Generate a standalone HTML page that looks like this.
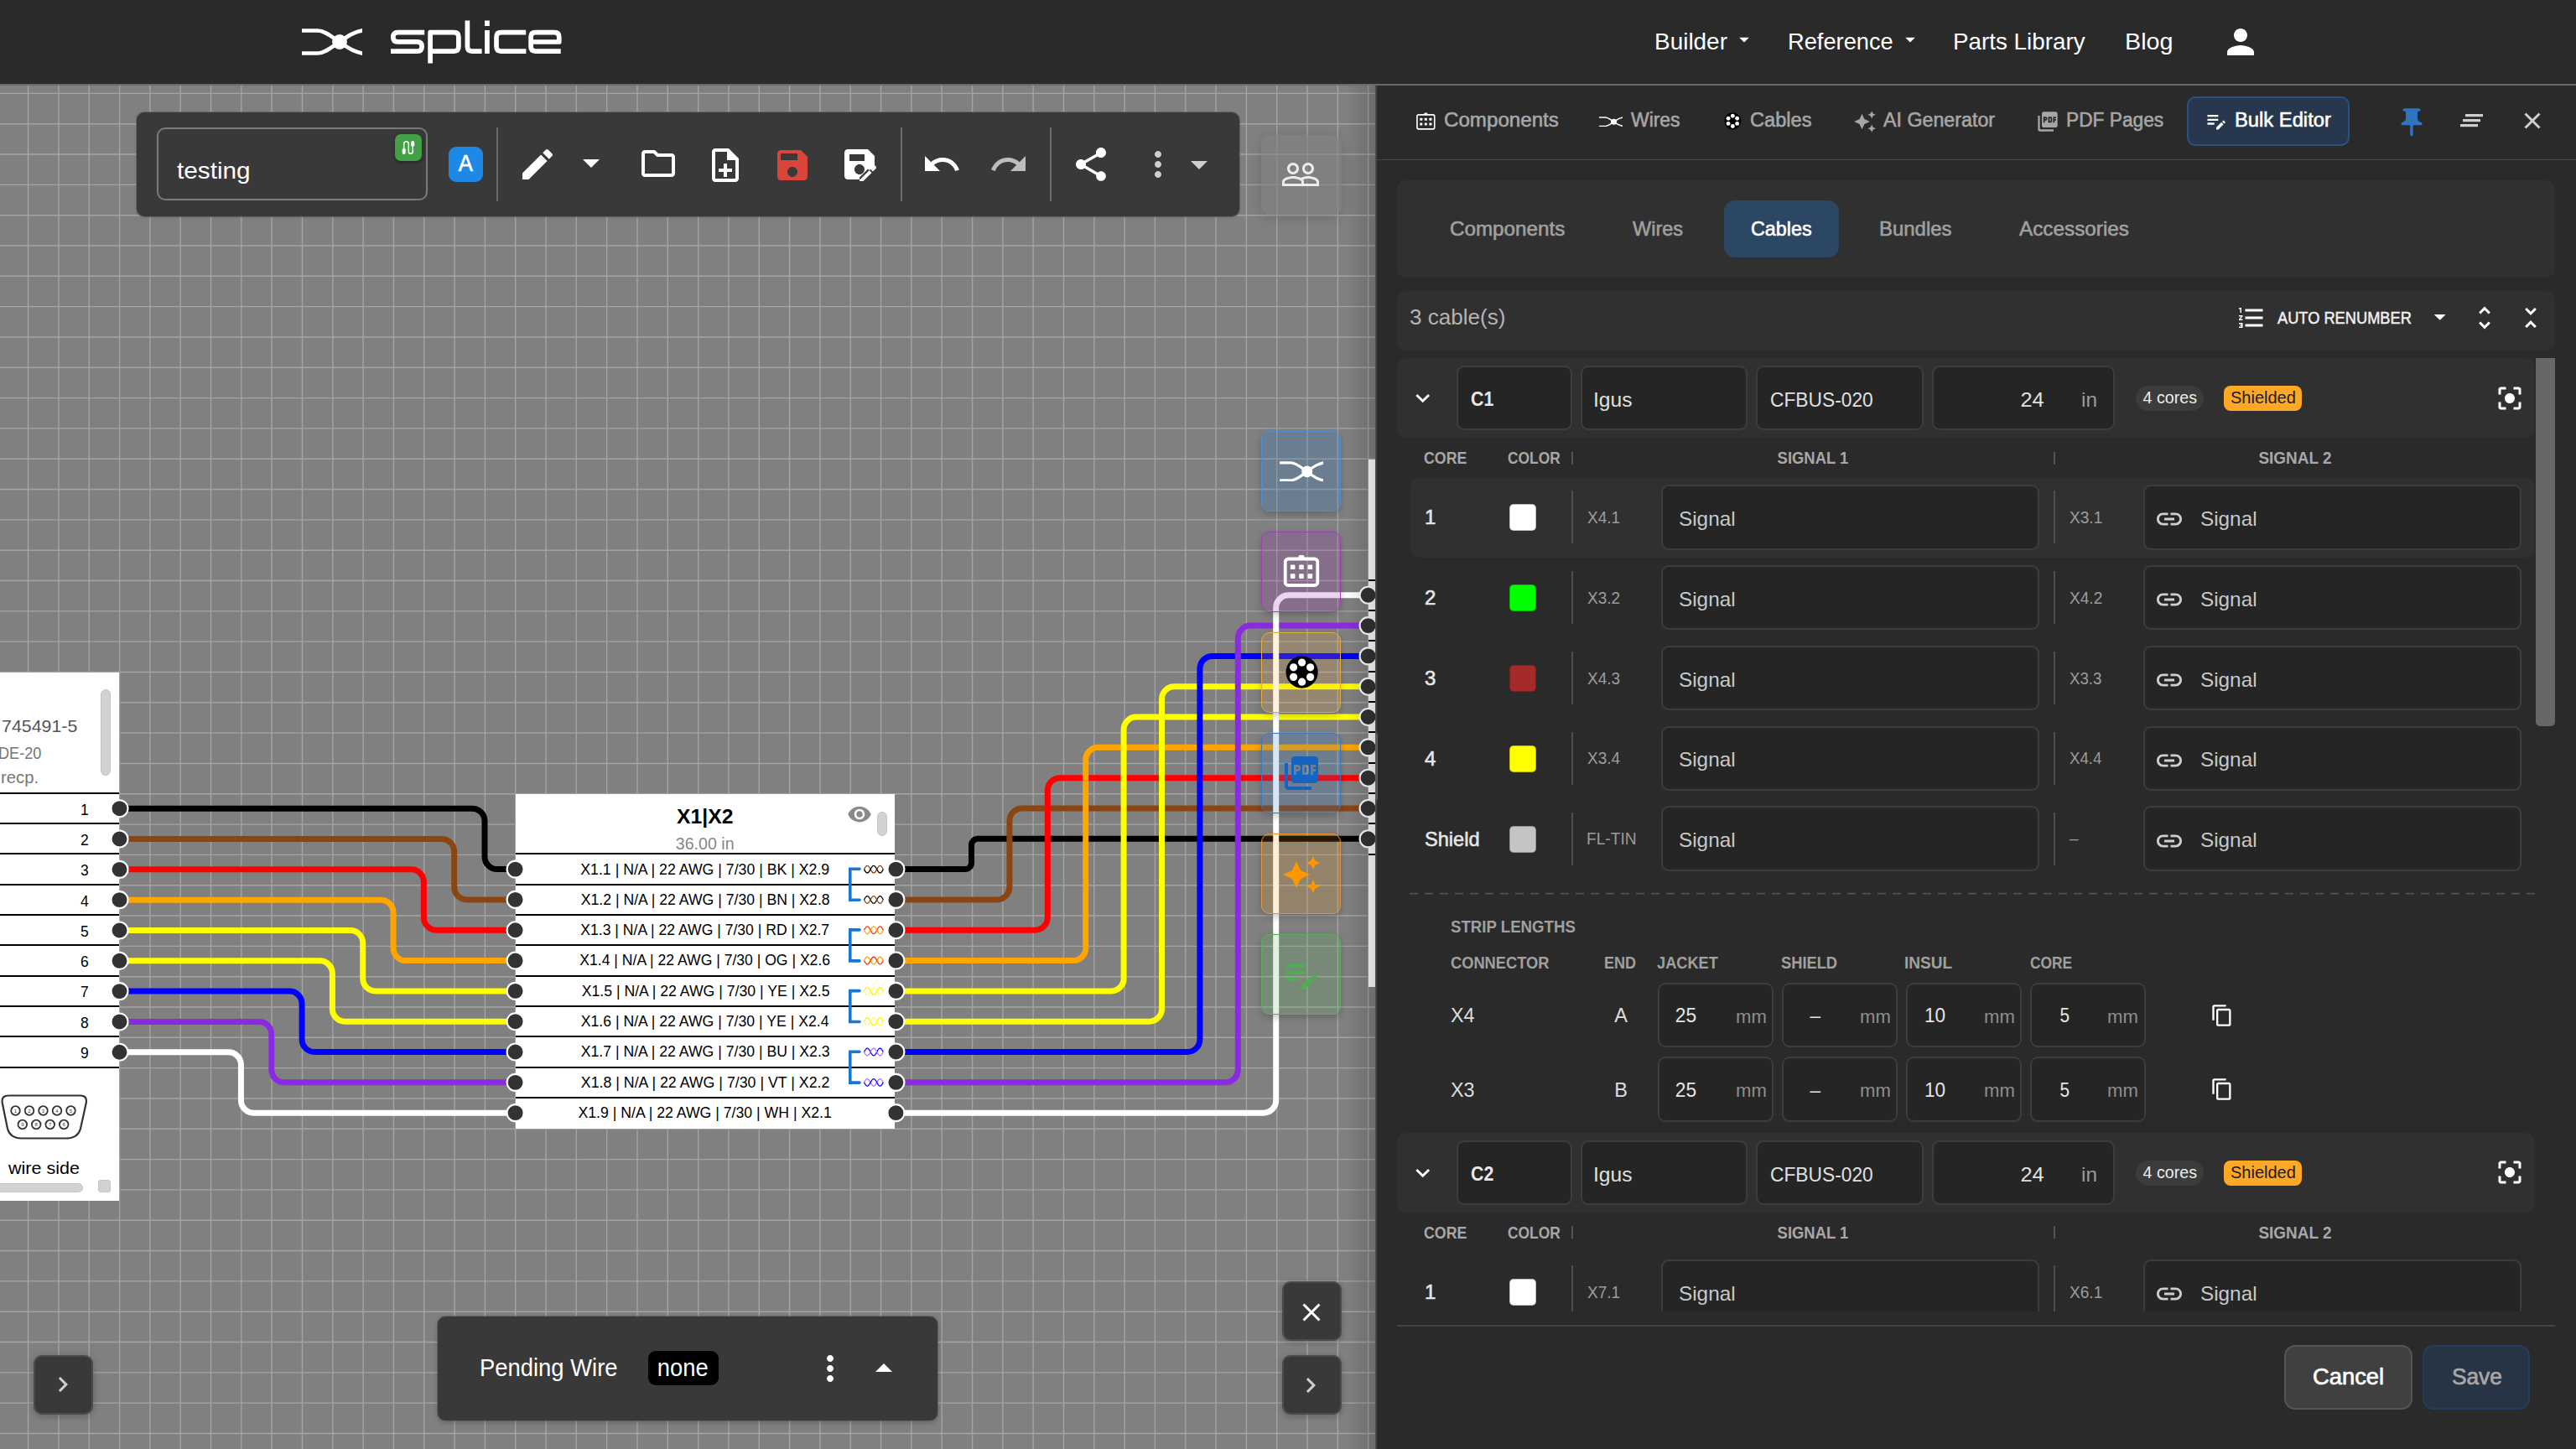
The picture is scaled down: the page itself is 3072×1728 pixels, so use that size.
<!DOCTYPE html><html><head><meta charset="utf-8"><style>
html,body{margin:0;padding:0;}
body{width:3072px;height:1728px;overflow:hidden;position:relative;background:#808080;font-family:"Liberation Sans", sans-serif;}
.t{position:absolute;white-space:nowrap;}
.i{position:absolute;overflow:visible;}
.b{position:absolute;box-sizing:border-box;}
svg{display:block;}
</style></head><body>
<svg style="position:absolute;left:0;top:0;" width="1641" height="1728"><g stroke="#a4a4a4" stroke-width="1.4"><line x1="33.60" y1="102" x2="33.60" y2="1728"/><line x1="69.92" y1="102" x2="69.92" y2="1728"/><line x1="106.24" y1="102" x2="106.24" y2="1728"/><line x1="142.56" y1="102" x2="142.56" y2="1728"/><line x1="178.88" y1="102" x2="178.88" y2="1728"/><line x1="215.20" y1="102" x2="215.20" y2="1728"/><line x1="251.52" y1="102" x2="251.52" y2="1728"/><line x1="287.84" y1="102" x2="287.84" y2="1728"/><line x1="324.16" y1="102" x2="324.16" y2="1728"/><line x1="360.48" y1="102" x2="360.48" y2="1728"/><line x1="396.80" y1="102" x2="396.80" y2="1728"/><line x1="433.12" y1="102" x2="433.12" y2="1728"/><line x1="469.44" y1="102" x2="469.44" y2="1728"/><line x1="505.76" y1="102" x2="505.76" y2="1728"/><line x1="542.08" y1="102" x2="542.08" y2="1728"/><line x1="578.40" y1="102" x2="578.40" y2="1728"/><line x1="614.72" y1="102" x2="614.72" y2="1728"/><line x1="651.04" y1="102" x2="651.04" y2="1728"/><line x1="687.36" y1="102" x2="687.36" y2="1728"/><line x1="723.68" y1="102" x2="723.68" y2="1728"/><line x1="760.00" y1="102" x2="760.00" y2="1728"/><line x1="796.32" y1="102" x2="796.32" y2="1728"/><line x1="832.64" y1="102" x2="832.64" y2="1728"/><line x1="868.96" y1="102" x2="868.96" y2="1728"/><line x1="905.28" y1="102" x2="905.28" y2="1728"/><line x1="941.60" y1="102" x2="941.60" y2="1728"/><line x1="977.92" y1="102" x2="977.92" y2="1728"/><line x1="1014.24" y1="102" x2="1014.24" y2="1728"/><line x1="1050.56" y1="102" x2="1050.56" y2="1728"/><line x1="1086.88" y1="102" x2="1086.88" y2="1728"/><line x1="1123.20" y1="102" x2="1123.20" y2="1728"/><line x1="1159.52" y1="102" x2="1159.52" y2="1728"/><line x1="1195.84" y1="102" x2="1195.84" y2="1728"/><line x1="1232.16" y1="102" x2="1232.16" y2="1728"/><line x1="1268.48" y1="102" x2="1268.48" y2="1728"/><line x1="1304.80" y1="102" x2="1304.80" y2="1728"/><line x1="1341.12" y1="102" x2="1341.12" y2="1728"/><line x1="1377.44" y1="102" x2="1377.44" y2="1728"/><line x1="1413.76" y1="102" x2="1413.76" y2="1728"/><line x1="1450.08" y1="102" x2="1450.08" y2="1728"/><line x1="1486.40" y1="102" x2="1486.40" y2="1728"/><line x1="1522.72" y1="102" x2="1522.72" y2="1728"/><line x1="1559.04" y1="102" x2="1559.04" y2="1728"/><line x1="1595.36" y1="102" x2="1595.36" y2="1728"/><line x1="1631.68" y1="102" x2="1631.68" y2="1728"/><line x1="0" y1="111.40" x2="1641" y2="111.40"/><line x1="0" y1="147.72" x2="1641" y2="147.72"/><line x1="0" y1="184.04" x2="1641" y2="184.04"/><line x1="0" y1="220.36" x2="1641" y2="220.36"/><line x1="0" y1="256.68" x2="1641" y2="256.68"/><line x1="0" y1="293.00" x2="1641" y2="293.00"/><line x1="0" y1="329.32" x2="1641" y2="329.32"/><line x1="0" y1="365.64" x2="1641" y2="365.64"/><line x1="0" y1="401.96" x2="1641" y2="401.96"/><line x1="0" y1="438.28" x2="1641" y2="438.28"/><line x1="0" y1="474.60" x2="1641" y2="474.60"/><line x1="0" y1="510.92" x2="1641" y2="510.92"/><line x1="0" y1="547.24" x2="1641" y2="547.24"/><line x1="0" y1="583.56" x2="1641" y2="583.56"/><line x1="0" y1="619.88" x2="1641" y2="619.88"/><line x1="0" y1="656.20" x2="1641" y2="656.20"/><line x1="0" y1="692.52" x2="1641" y2="692.52"/><line x1="0" y1="728.84" x2="1641" y2="728.84"/><line x1="0" y1="765.16" x2="1641" y2="765.16"/><line x1="0" y1="801.48" x2="1641" y2="801.48"/><line x1="0" y1="837.80" x2="1641" y2="837.80"/><line x1="0" y1="874.12" x2="1641" y2="874.12"/><line x1="0" y1="910.44" x2="1641" y2="910.44"/><line x1="0" y1="946.76" x2="1641" y2="946.76"/><line x1="0" y1="983.08" x2="1641" y2="983.08"/><line x1="0" y1="1019.40" x2="1641" y2="1019.40"/><line x1="0" y1="1055.72" x2="1641" y2="1055.72"/><line x1="0" y1="1092.04" x2="1641" y2="1092.04"/><line x1="0" y1="1128.36" x2="1641" y2="1128.36"/><line x1="0" y1="1164.68" x2="1641" y2="1164.68"/><line x1="0" y1="1201.00" x2="1641" y2="1201.00"/><line x1="0" y1="1237.32" x2="1641" y2="1237.32"/><line x1="0" y1="1273.64" x2="1641" y2="1273.64"/><line x1="0" y1="1309.96" x2="1641" y2="1309.96"/><line x1="0" y1="1346.28" x2="1641" y2="1346.28"/><line x1="0" y1="1382.60" x2="1641" y2="1382.60"/><line x1="0" y1="1418.92" x2="1641" y2="1418.92"/><line x1="0" y1="1455.24" x2="1641" y2="1455.24"/><line x1="0" y1="1491.56" x2="1641" y2="1491.56"/><line x1="0" y1="1527.88" x2="1641" y2="1527.88"/><line x1="0" y1="1564.20" x2="1641" y2="1564.20"/><line x1="0" y1="1600.52" x2="1641" y2="1600.52"/><line x1="0" y1="1636.84" x2="1641" y2="1636.84"/><line x1="0" y1="1673.16" x2="1641" y2="1673.16"/><line x1="0" y1="1709.48" x2="1641" y2="1709.48"/></g></svg>
<div class="b" style="left:-10.0px;top:801.7px;width:151.9px;height:630.0px;background:#fff;"></div>
<div class="b" style="left:120.2px;top:821.9px;width:11.8px;height:102.8px;background:#d2d2d2;border-radius:6px;border:1px solid #c4c4c4;"></div>
<div id="f1" class="t" style="left:2.3px;top:854.9px;font-size:21px;line-height:21px;color:#555;font-weight:400;transform:scaleX(1.0185);transform-origin:0 0;">745491-5</div>
<div class="t" style="left:-2.5px;top:889.0px;font-size:19.5px;line-height:19.5px;color:#777;font-weight:400;transform:scaleX(0.93);transform-origin:0 0;">DE-20</div>
<div id="f2" class="t" style="left:0.8px;top:918.0px;font-size:19.5px;line-height:19.5px;color:#777;font-weight:400;transform:scaleX(1.0394);transform-origin:0 0;">recp.</div>
<div class="b" style="left:0.0px;top:944.7px;width:141.9px;height:2.0px;background:#000;"></div>
<div class="b" style="left:0.0px;top:981.0px;width:141.9px;height:2.0px;background:#000;"></div>
<div class="b" style="left:0.0px;top:1017.3px;width:141.9px;height:2.0px;background:#000;"></div>
<div class="b" style="left:0.0px;top:1053.6px;width:141.9px;height:2.0px;background:#000;"></div>
<div class="b" style="left:0.0px;top:1089.9px;width:141.9px;height:2.0px;background:#000;"></div>
<div class="b" style="left:0.0px;top:1126.3px;width:141.9px;height:2.0px;background:#000;"></div>
<div class="b" style="left:0.0px;top:1162.6px;width:141.9px;height:2.0px;background:#000;"></div>
<div class="b" style="left:0.0px;top:1198.9px;width:141.9px;height:2.0px;background:#000;"></div>
<div class="b" style="left:0.0px;top:1235.2px;width:141.9px;height:2.0px;background:#000;"></div>
<div class="b" style="left:0.0px;top:1271.5px;width:141.9px;height:2.0px;background:#000;"></div>
<div class="t" style="left:-1094.4px;width:1200px;text-align:right;top:957.5px;"><span style="display:inline-block;font-size:17.5px;line-height:17.5px;color:#000;font-weight:400;">1</span></div>
<div class="t" style="left:-1094.4px;width:1200px;text-align:right;top:993.8px;"><span style="display:inline-block;font-size:17.5px;line-height:17.5px;color:#000;font-weight:400;">2</span></div>
<div class="t" style="left:-1094.4px;width:1200px;text-align:right;top:1030.1px;"><span style="display:inline-block;font-size:17.5px;line-height:17.5px;color:#000;font-weight:400;">3</span></div>
<div class="t" style="left:-1094.4px;width:1200px;text-align:right;top:1066.5px;"><span style="display:inline-block;font-size:17.5px;line-height:17.5px;color:#000;font-weight:400;">4</span></div>
<div class="t" style="left:-1094.4px;width:1200px;text-align:right;top:1102.8px;"><span style="display:inline-block;font-size:17.5px;line-height:17.5px;color:#000;font-weight:400;">5</span></div>
<div class="t" style="left:-1094.4px;width:1200px;text-align:right;top:1139.1px;"><span style="display:inline-block;font-size:17.5px;line-height:17.5px;color:#000;font-weight:400;">6</span></div>
<div class="t" style="left:-1094.4px;width:1200px;text-align:right;top:1175.4px;"><span style="display:inline-block;font-size:17.5px;line-height:17.5px;color:#000;font-weight:400;">7</span></div>
<div class="t" style="left:-1094.4px;width:1200px;text-align:right;top:1211.7px;"><span style="display:inline-block;font-size:17.5px;line-height:17.5px;color:#000;font-weight:400;">8</span></div>
<div class="t" style="left:-1094.4px;width:1200px;text-align:right;top:1248.1px;"><span style="display:inline-block;font-size:17.5px;line-height:17.5px;color:#000;font-weight:400;">9</span></div>
<svg style="position:absolute;left:0;top:1300px;" width="110" height="64" viewBox="0 0 110 64">
<path d="M10 6.5 Q2 6.5 2.5 14 L9 46 Q12 57 25 57.5 L80 57.5 Q93 57 96 46 L103 14 Q103.5 6.5 96 6.5 Z" fill="none" stroke="#333" stroke-width="2.2"/>
<g fill="none" stroke="#333" stroke-width="1.8">
<circle cx="18.5" cy="24.5" r="5.3"/><circle cx="35" cy="24.5" r="5.3"/><circle cx="51.5" cy="24.5" r="5.3"/><circle cx="68" cy="24.5" r="5.3"/><circle cx="84.5" cy="24.5" r="5.3"/>
<circle cx="26.8" cy="41" r="5.3"/><circle cx="43.2" cy="41" r="5.3"/><circle cx="59.7" cy="41" r="5.3"/><circle cx="76.2" cy="41" r="5.3"/>
</g>
<g font-family="Liberation Sans" font-size="6" fill="#333" text-anchor="middle">
<text x="18.5" y="26.7">1</text><text x="35" y="26.7">2</text><text x="51.5" y="26.7">3</text><text x="68" y="26.7">4</text><text x="84.5" y="26.7">5</text>
<text x="26.8" y="43.2">9</text><text x="43.2" y="43.2">8</text><text x="59.7" y="43.2">7</text><text x="76.2" y="43.2">6</text>
</g></svg>
<div id="f3" class="t" style="left:9.8px;top:1381.6px;font-size:21px;line-height:21px;color:#000;font-weight:400;transform:scaleX(1.0241);transform-origin:0 0;">wire side</div>
<div class="b" style="left:-10.0px;top:1410.6px;width:108.9px;height:11.1px;background:#d2d2d2;border-radius:6px;border:1px solid #c4c4c4;"></div>
<div class="b" style="left:116.8px;top:1407.3px;width:14.9px;height:14.9px;background:#d2d2d2;border-radius:3px;border:1px solid #c4c4c4;"></div>
<div class="b" style="left:615.1px;top:947.0px;width:452.0px;height:398.5px;background:#fff;"></div>
<div class="t" style="left:240.6px;width:1200px;text-align:center;top:961.7px;"><span id="f4" style="display:inline-block;font-size:24px;line-height:24px;color:#000;font-weight:700;transform:scaleX(1.0283);transform-origin:50% 0;">X1|X2</span></div>
<div class="t" style="left:241.2px;width:1200px;text-align:center;top:996.5px;"><span id="f5" style="display:inline-block;font-size:19.5px;line-height:19.5px;color:#888;font-weight:400;transform:scaleX(1.0059);transform-origin:50% 0;">36.00 in</span></div>
<svg class="i" style="left:1009.5px;top:955.5px;width:30px;height:30px;" viewBox="0 0 24 24"><path fill="#8a8a8a" d="M12 4.5C7 4.5 2.73 7.61 1 12c1.73 4.39 6 7.5 11 7.5s9.27-3.11 11-7.5c-1.73-4.39-6-7.5-11-7.5zM12 17c-2.76 0-5-2.24-5-5s2.24-5 5-5 5 2.24 5 5-2.24 5-5 5zm0-8c-1.66 0-3 1.34-3 3s1.34 3 3 3 3-1.34 3-3-1.34-3-3-3z"/></svg>
<div class="b" style="left:1046.4px;top:967.8px;width:11.3px;height:29.2px;background:#d2d2d2;border-radius:6px;border:1px solid #c4c4c4;"></div>
<div class="b" style="left:615.1px;top:1017.3px;width:452.0px;height:2.0px;background:#000;"></div>
<div class="b" style="left:615.1px;top:1053.6px;width:452.0px;height:2.0px;background:#000;"></div>
<div class="b" style="left:615.1px;top:1089.9px;width:452.0px;height:2.0px;background:#000;"></div>
<div class="b" style="left:615.1px;top:1126.3px;width:452.0px;height:2.0px;background:#000;"></div>
<div class="b" style="left:615.1px;top:1162.6px;width:452.0px;height:2.0px;background:#000;"></div>
<div class="b" style="left:615.1px;top:1198.9px;width:452.0px;height:2.0px;background:#000;"></div>
<div class="b" style="left:615.1px;top:1235.2px;width:452.0px;height:2.0px;background:#000;"></div>
<div class="b" style="left:615.1px;top:1271.5px;width:452.0px;height:2.0px;background:#000;"></div>
<div class="b" style="left:615.1px;top:1307.9px;width:452.0px;height:2.0px;background:#000;"></div>
<div class="t" style="left:240.5px;width:1200px;text-align:center;top:1028.5px;"><span id="f6" style="display:inline-block;font-size:17.5px;line-height:17.5px;color:#000;font-weight:400;transform:scaleX(1.0116);transform-origin:50% 0;">X1.1 | N/A | 22 AWG | 7/30 | BK | X2.9</span></div>
<div class="t" style="left:241.0px;width:1200px;text-align:center;top:1064.8px;"><span id="f7" style="display:inline-block;font-size:17.5px;line-height:17.5px;color:#000;font-weight:400;transform:scaleX(1.0082);transform-origin:50% 0;">X1.2 | N/A | 22 AWG | 7/30 | BN | X2.8</span></div>
<div class="t" style="left:240.5px;width:1200px;text-align:center;top:1101.1px;"><span id="f8" style="display:inline-block;font-size:17.5px;line-height:17.5px;color:#000;font-weight:400;transform:scaleX(1.0048);transform-origin:50% 0;">X1.3 | N/A | 22 AWG | 7/30 | RD | X2.7</span></div>
<div class="t" style="left:241.0px;width:1200px;text-align:center;top:1137.4px;"><span id="f9" style="display:inline-block;font-size:17.5px;line-height:17.5px;color:#000;font-weight:400;transform:scaleX(1.0047);transform-origin:50% 0;">X1.4 | N/A | 22 AWG | 7/30 | OG | X2.6</span></div>
<div class="t" style="left:241.5px;width:1200px;text-align:center;top:1173.8px;"><span id="f10" style="display:inline-block;font-size:17.5px;line-height:17.5px;color:#000;font-weight:400;transform:scaleX(1.0089);transform-origin:50% 0;">X1.5 | N/A | 22 AWG | 7/30 | YE | X2.5</span></div>
<div class="t" style="left:240.5px;width:1200px;text-align:center;top:1210.1px;"><span id="f11" style="display:inline-block;font-size:17.5px;line-height:17.5px;color:#000;font-weight:400;transform:scaleX(1.0089);transform-origin:50% 0;">X1.6 | N/A | 22 AWG | 7/30 | YE | X2.4</span></div>
<div class="t" style="left:241.0px;width:1200px;text-align:center;top:1246.4px;"><span id="f12" style="display:inline-block;font-size:17.5px;line-height:17.5px;color:#000;font-weight:400;transform:scaleX(1.0082);transform-origin:50% 0;">X1.7 | N/A | 22 AWG | 7/30 | BU | X2.3</span></div>
<div class="t" style="left:241.0px;width:1200px;text-align:center;top:1282.7px;"><span id="f13" style="display:inline-block;font-size:17.5px;line-height:17.5px;color:#000;font-weight:400;transform:scaleX(1.0151);transform-origin:50% 0;">X1.8 | N/A | 22 AWG | 7/30 | VT | X2.2</span></div>
<div class="t" style="left:240.5px;width:1200px;text-align:center;top:1319.0px;"><span id="f14" style="display:inline-block;font-size:17.5px;line-height:17.5px;color:#000;font-weight:400;transform:scaleX(1.0100);transform-origin:50% 0;">X1.9 | N/A | 22 AWG | 7/30 | WH | X2.1</span></div>
<svg style="position:absolute;left:0;top:0;" width="1641" height="1728"><path d="M1025 1036.3 H1013.8 V1073.2 H1025" fill="none" stroke="#1976d2" stroke-width="3.6" stroke-linecap="round" stroke-linejoin="miter"/><path d="M1025 1108.9 H1013.8 V1145.9 H1025" fill="none" stroke="#1976d2" stroke-width="3.6" stroke-linecap="round" stroke-linejoin="miter"/><path d="M1025 1181.6 H1013.8 V1218.5 H1025" fill="none" stroke="#1976d2" stroke-width="3.6" stroke-linecap="round" stroke-linejoin="miter"/><path d="M1025 1254.2 H1013.8 V1291.1 H1025" fill="none" stroke="#1976d2" stroke-width="3.6" stroke-linecap="round" stroke-linejoin="miter"/><path d="M1030.5 1036.6 c1.2 -2.5 2.2 -4.3 3.8 -4.3 c1.6 0 2.6 1.8 3.8 4.3 c1.2 2.5 2.2 4.3 3.8 4.3 c1.6 0 2.6 -1.8 3.8 -4.3 c1.2 -2.5 2.2 -4.3 3.8 -4.3 c1.6 0 2.6 1.8 3.8 4.3" fill="none" stroke="#8B4513" stroke-width="1.3"/><path d="M1030.5 1036.6 c1.2 2.5 2.2 4.3 3.8 4.3 c1.6 0 2.6 -1.8 3.8 -4.3 c1.2 -2.5 2.2 -4.3 3.8 -4.3 c1.6 0 2.6 1.8 3.8 4.3 c1.2 2.5 2.2 4.3 3.8 4.3 c1.6 0 2.6 -1.8 3.8 -4.3" fill="none" stroke="#000" stroke-width="1.3"/><path d="M1030.5 1072.9199999999998 c1.2 -2.5 2.2 -4.3 3.8 -4.3 c1.6 0 2.6 1.8 3.8 4.3 c1.2 2.5 2.2 4.3 3.8 4.3 c1.6 0 2.6 -1.8 3.8 -4.3 c1.2 -2.5 2.2 -4.3 3.8 -4.3 c1.6 0 2.6 1.8 3.8 4.3" fill="none" stroke="#000" stroke-width="1.3"/><path d="M1030.5 1072.9199999999998 c1.2 2.5 2.2 4.3 3.8 4.3 c1.6 0 2.6 -1.8 3.8 -4.3 c1.2 -2.5 2.2 -4.3 3.8 -4.3 c1.6 0 2.6 1.8 3.8 4.3 c1.2 2.5 2.2 4.3 3.8 4.3 c1.6 0 2.6 -1.8 3.8 -4.3" fill="none" stroke="#8B4513" stroke-width="1.3"/><path d="M1030.5 1109.24 c1.2 -2.5 2.2 -4.3 3.8 -4.3 c1.6 0 2.6 1.8 3.8 4.3 c1.2 2.5 2.2 4.3 3.8 4.3 c1.6 0 2.6 -1.8 3.8 -4.3 c1.2 -2.5 2.2 -4.3 3.8 -4.3 c1.6 0 2.6 1.8 3.8 4.3" fill="none" stroke="#ff2a00" stroke-width="1.3"/><path d="M1030.5 1109.24 c1.2 2.5 2.2 4.3 3.8 4.3 c1.6 0 2.6 -1.8 3.8 -4.3 c1.2 -2.5 2.2 -4.3 3.8 -4.3 c1.6 0 2.6 1.8 3.8 4.3 c1.2 2.5 2.2 4.3 3.8 4.3 c1.6 0 2.6 -1.8 3.8 -4.3" fill="none" stroke="#ffa500" stroke-width="1.3"/><path d="M1030.5 1145.56 c1.2 -2.5 2.2 -4.3 3.8 -4.3 c1.6 0 2.6 1.8 3.8 4.3 c1.2 2.5 2.2 4.3 3.8 4.3 c1.6 0 2.6 -1.8 3.8 -4.3 c1.2 -2.5 2.2 -4.3 3.8 -4.3 c1.6 0 2.6 1.8 3.8 4.3" fill="none" stroke="#ffa500" stroke-width="1.3"/><path d="M1030.5 1145.56 c1.2 2.5 2.2 4.3 3.8 4.3 c1.6 0 2.6 -1.8 3.8 -4.3 c1.2 -2.5 2.2 -4.3 3.8 -4.3 c1.6 0 2.6 1.8 3.8 4.3 c1.2 2.5 2.2 4.3 3.8 4.3 c1.6 0 2.6 -1.8 3.8 -4.3" fill="none" stroke="#ff2a00" stroke-width="1.3"/><path d="M1030.5 1181.8799999999999 c1.2 -2.5 2.2 -4.3 3.8 -4.3 c1.6 0 2.6 1.8 3.8 4.3 c1.2 2.5 2.2 4.3 3.8 4.3 c1.6 0 2.6 -1.8 3.8 -4.3 c1.2 -2.5 2.2 -4.3 3.8 -4.3 c1.6 0 2.6 1.8 3.8 4.3" fill="none" stroke="#ffee00" stroke-width="1.3"/><path d="M1030.5 1181.8799999999999 c1.2 2.5 2.2 4.3 3.8 4.3 c1.6 0 2.6 -1.8 3.8 -4.3 c1.2 -2.5 2.2 -4.3 3.8 -4.3 c1.6 0 2.6 1.8 3.8 4.3 c1.2 2.5 2.2 4.3 3.8 4.3 c1.6 0 2.6 -1.8 3.8 -4.3" fill="none" stroke="#ffff66" stroke-width="1.3"/><path d="M1030.5 1218.1999999999998 c1.2 -2.5 2.2 -4.3 3.8 -4.3 c1.6 0 2.6 1.8 3.8 4.3 c1.2 2.5 2.2 4.3 3.8 4.3 c1.6 0 2.6 -1.8 3.8 -4.3 c1.2 -2.5 2.2 -4.3 3.8 -4.3 c1.6 0 2.6 1.8 3.8 4.3" fill="none" stroke="#ffee00" stroke-width="1.3"/><path d="M1030.5 1218.1999999999998 c1.2 2.5 2.2 4.3 3.8 4.3 c1.6 0 2.6 -1.8 3.8 -4.3 c1.2 -2.5 2.2 -4.3 3.8 -4.3 c1.6 0 2.6 1.8 3.8 4.3 c1.2 2.5 2.2 4.3 3.8 4.3 c1.6 0 2.6 -1.8 3.8 -4.3" fill="none" stroke="#ffff66" stroke-width="1.3"/><path d="M1030.5 1254.52 c1.2 -2.5 2.2 -4.3 3.8 -4.3 c1.6 0 2.6 1.8 3.8 4.3 c1.2 2.5 2.2 4.3 3.8 4.3 c1.6 0 2.6 -1.8 3.8 -4.3 c1.2 -2.5 2.2 -4.3 3.8 -4.3 c1.6 0 2.6 1.8 3.8 4.3" fill="none" stroke="#0000ff" stroke-width="1.3"/><path d="M1030.5 1254.52 c1.2 2.5 2.2 4.3 3.8 4.3 c1.6 0 2.6 -1.8 3.8 -4.3 c1.2 -2.5 2.2 -4.3 3.8 -4.3 c1.6 0 2.6 1.8 3.8 4.3 c1.2 2.5 2.2 4.3 3.8 4.3 c1.6 0 2.6 -1.8 3.8 -4.3" fill="none" stroke="#b070ff" stroke-width="1.3"/><path d="M1030.5 1290.84 c1.2 -2.5 2.2 -4.3 3.8 -4.3 c1.6 0 2.6 1.8 3.8 4.3 c1.2 2.5 2.2 4.3 3.8 4.3 c1.6 0 2.6 -1.8 3.8 -4.3 c1.2 -2.5 2.2 -4.3 3.8 -4.3 c1.6 0 2.6 1.8 3.8 4.3" fill="none" stroke="#b070ff" stroke-width="1.3"/><path d="M1030.5 1290.84 c1.2 2.5 2.2 4.3 3.8 4.3 c1.6 0 2.6 -1.8 3.8 -4.3 c1.2 -2.5 2.2 -4.3 3.8 -4.3 c1.6 0 2.6 1.8 3.8 4.3 c1.2 2.5 2.2 4.3 3.8 4.3 c1.6 0 2.6 -1.8 3.8 -4.3" fill="none" stroke="#0000ff" stroke-width="1.3"/></svg>
<div class="b" style="left:1632.0px;top:547.6px;width:12.0px;height:629.4px;background:#fff;"></div>
<div class="b" style="left:1632.0px;top:690.6px;width:12.0px;height:2.0px;background:#000;"></div>
<div class="b" style="left:1632.0px;top:726.9px;width:12.0px;height:2.0px;background:#000;"></div>
<div class="b" style="left:1632.0px;top:763.2px;width:12.0px;height:2.0px;background:#000;"></div>
<div class="b" style="left:1632.0px;top:799.6px;width:12.0px;height:2.0px;background:#000;"></div>
<div class="b" style="left:1632.0px;top:835.9px;width:12.0px;height:2.0px;background:#000;"></div>
<div class="b" style="left:1632.0px;top:872.2px;width:12.0px;height:2.0px;background:#000;"></div>
<div class="b" style="left:1632.0px;top:908.5px;width:12.0px;height:2.0px;background:#000;"></div>
<div class="b" style="left:1632.0px;top:944.8px;width:12.0px;height:2.0px;background:#000;"></div>
<div class="b" style="left:1632.0px;top:981.2px;width:12.0px;height:2.0px;background:#000;"></div>
<div class="b" style="left:1632.0px;top:1017.5px;width:12.0px;height:2.0px;background:#000;"></div>
<svg style="position:absolute;left:0;top:0;" width="1641" height="1728"><g fill="none" stroke-width="7" stroke-linejoin="round"><path d="M142.5 964.20 H563.00 A15 15 0 0 1 578.00 979.20 V1021.60 A15 15 0 0 0 593.00 1036.60 H614.6" stroke="#000000"/><path d="M142.5 1000.52 H526.68 A15 15 0 0 1 541.68 1015.52 V1057.92 A15 15 0 0 0 556.68 1072.92 H614.6" stroke="#8b4513"/><path d="M142.5 1036.84 H490.36 A15 15 0 0 1 505.36 1051.84 V1094.24 A15 15 0 0 0 520.36 1109.24 H614.6" stroke="#ff0000"/><path d="M142.5 1073.16 H454.04 A15 15 0 0 1 469.04 1088.16 V1130.56 A15 15 0 0 0 484.04 1145.56 H614.6" stroke="#ffa500"/><path d="M142.5 1109.48 H417.72 A15 15 0 0 1 432.72 1124.48 V1166.88 A15 15 0 0 0 447.72 1181.88 H614.6" stroke="#ffff00"/><path d="M142.5 1145.80 H381.40 A15 15 0 0 1 396.40 1160.80 V1203.20 A15 15 0 0 0 411.40 1218.20 H614.6" stroke="#ffff00"/><path d="M142.5 1182.12 H345.08 A15 15 0 0 1 360.08 1197.12 V1239.52 A15 15 0 0 0 375.08 1254.52 H614.6" stroke="#0000ff"/><path d="M142.5 1218.44 H308.76 A15 15 0 0 1 323.76 1233.44 V1275.84 A15 15 0 0 0 338.76 1290.84 H614.6" stroke="#8a2be2"/><path d="M142.5 1254.76 H272.44 A15 15 0 0 1 287.44 1269.76 V1312.16 A15 15 0 0 0 302.44 1327.16 H614.6" stroke="#ffffff"/><path d="M1068.4 1036.60 H1150.88 A7.618799999999994 7.618799999999994 0 0 0 1158.50 1028.98 V1007.94 A7.618799999999994 7.618799999999994 0 0 1 1166.12 1000.32 H1640" stroke="#000000"/><path d="M1068.4 1072.92 H1188.90 A15 15 0 0 0 1203.90 1057.92 V979.00 A15 15 0 0 1 1218.90 964.00 H1640" stroke="#8b4513"/><path d="M1068.4 1109.24 H1234.30 A15 15 0 0 0 1249.30 1094.24 V942.68 A15 15 0 0 1 1264.30 927.68 H1640" stroke="#ff0000"/><path d="M1068.4 1145.56 H1279.70 A15 15 0 0 0 1294.70 1130.56 V906.36 A15 15 0 0 1 1309.70 891.36 H1640" stroke="#ffa500"/><path d="M1068.4 1181.88 H1325.10 A15 15 0 0 0 1340.10 1166.88 V870.04 A15 15 0 0 1 1355.10 855.04 H1640" stroke="#ffff00"/><path d="M1068.4 1218.20 H1370.50 A15 15 0 0 0 1385.50 1203.20 V833.72 A15 15 0 0 1 1400.50 818.72 H1640" stroke="#ffff00"/><path d="M1068.4 1254.52 H1415.90 A15 15 0 0 0 1430.90 1239.52 V797.40 A15 15 0 0 1 1445.90 782.40 H1640" stroke="#0000ff"/><path d="M1068.4 1290.84 H1461.30 A15 15 0 0 0 1476.30 1275.84 V761.08 A15 15 0 0 1 1491.30 746.08 H1640" stroke="#8a2be2"/><path d="M1068.4 1327.16 H1506.70 A15 15 0 0 0 1521.70 1312.16 V724.76 A15 15 0 0 1 1536.70 709.76 H1640" stroke="#ffffff"/></g><g fill="#333" stroke="#fff" stroke-width="2.1"><circle cx="142.5" cy="964.20" r="10"/><circle cx="614.6" cy="1036.60" r="10"/><circle cx="1068.4" cy="1036.60" r="10"/><circle cx="1631.6" cy="709.76" r="10"/><circle cx="142.5" cy="1000.52" r="10"/><circle cx="614.6" cy="1072.92" r="10"/><circle cx="1068.4" cy="1072.92" r="10"/><circle cx="1631.6" cy="746.08" r="10"/><circle cx="142.5" cy="1036.84" r="10"/><circle cx="614.6" cy="1109.24" r="10"/><circle cx="1068.4" cy="1109.24" r="10"/><circle cx="1631.6" cy="782.40" r="10"/><circle cx="142.5" cy="1073.16" r="10"/><circle cx="614.6" cy="1145.56" r="10"/><circle cx="1068.4" cy="1145.56" r="10"/><circle cx="1631.6" cy="818.72" r="10"/><circle cx="142.5" cy="1109.48" r="10"/><circle cx="614.6" cy="1181.88" r="10"/><circle cx="1068.4" cy="1181.88" r="10"/><circle cx="1631.6" cy="855.04" r="10"/><circle cx="142.5" cy="1145.80" r="10"/><circle cx="614.6" cy="1218.20" r="10"/><circle cx="1068.4" cy="1218.20" r="10"/><circle cx="1631.6" cy="891.36" r="10"/><circle cx="142.5" cy="1182.12" r="10"/><circle cx="614.6" cy="1254.52" r="10"/><circle cx="1068.4" cy="1254.52" r="10"/><circle cx="1631.6" cy="927.68" r="10"/><circle cx="142.5" cy="1218.44" r="10"/><circle cx="614.6" cy="1290.84" r="10"/><circle cx="1068.4" cy="1290.84" r="10"/><circle cx="1631.6" cy="964.00" r="10"/><circle cx="142.5" cy="1254.76" r="10"/><circle cx="614.6" cy="1327.16" r="10"/><circle cx="1068.4" cy="1327.16" r="10"/><circle cx="1631.6" cy="1000.32" r="10"/></g></svg>
<div class="b" style="left:1605.0px;top:102.0px;width:36.0px;height:1626.0px;background:linear-gradient(to right, rgba(0,0,0,0), rgba(0,0,0,0.16));"></div>
<div class="b" style="left:162.6px;top:133.6px;width:1315.3px;height:124.9px;background:#393939;border-radius:9px;box-shadow:0 0 0 1px rgba(90,90,90,0.6), 0 1px 3px rgba(0,0,0,0.2);"></div>
<div class="b" style="left:186.9px;top:152.2px;width:323.5px;height:87.3px;border:2px solid #7a7a7a;border-radius:10px;"></div>
<div id="f15" class="t" style="left:210.7px;top:189.6px;font-size:28px;line-height:28px;color:#fff;font-weight:400;transform:scaleX(1.0617);transform-origin:0 0;">testing</div>
<div class="b" style="left:470.8px;top:160.0px;width:32.0px;height:32.0px;background:#43a047;border-radius:7px;box-shadow:0 2px 4px rgba(0,0,0,0.35);"></div>
<svg class="i" style="left:470.8px;top:160px;width:32px;height:32px" viewBox="0 0 32 32">
<path d="M10.7 18.5 V11.6 a2.8 2.8 0 0 1 5.6 0 V20.7 a2.45 2.45 0 0 0 4.9 0 V13.5" fill="none" stroke="#fff" stroke-width="1.5"/>
<path d="M8.7 17.6 h4 v4.2 a2 2.2 0 0 1 -4 0z M19.2 14.3 v-4 a2 2.2 0 0 1 4 0 v4z" fill="#fff"/>
</svg>
<div class="b" style="left:534.8px;top:174.8px;width:40.8px;height:42.2px;background:#1e88e5;border-radius:9px;"></div>
<div class="t" style="left:-45.1px;width:1200px;text-align:center;top:181.2px;"><span id="f16" style="display:inline-block;font-size:28px;line-height:28px;color:#fff;font-weight:400;-webkit-text-stroke:0.70px #fff;transform:scaleX(0.9114);transform-origin:50% 0;">A</span></div>
<div class="b" style="left:591.5px;top:152.3px;width:2.0px;height:87.3px;background:#6a6a6a;"></div>
<div class="b" style="left:1073.7px;top:152.3px;width:2.0px;height:87.3px;background:#6a6a6a;"></div>
<div class="b" style="left:1251.8px;top:152.3px;width:2.0px;height:87.3px;background:#6a6a6a;"></div>
<svg class="i" style="left:617.0px;top:172.0px;width:48px;height:48px;" viewBox="0 0 24 24"><path fill="#fff" d="M3 17.25V21h3.75L17.81 9.94l-3.75-3.75L3 17.25zM20.71 7.04c.39-.39.39-1.02 0-1.41l-2.34-2.34c-.39-.39-1.02-.39-1.41 0l-1.83 1.83 3.75 3.75 1.83-1.83z"/></svg>
<svg class="i" style="left:681.0px;top:170.2px;width:48px;height:48px;" viewBox="0 0 24 24"><path fill="#fff" d="M7 10l5 5 5-5z"/></svg>
<svg class="i" style="left:760.8px;top:171.3px;width:48px;height:48px;" viewBox="0 0 24 24"><path fill="#fff" d="M9.17 6l2 2H20v10H4V6h5.17M10 4H4c-1.1 0-1.99.9-1.99 2L2 18c0 1.1.9 2 2 2h16c1.1 0 2-.9 2-2V8c0-1.1-.9-2-2-2h-8l-2-2z"/></svg>
<svg class="i" style="left:841.4px;top:172.6px;width:48px;height:48px;" viewBox="0 0 24 24"><path fill="#fff" d="M13 11h-2v3H8v2h3v3h2v-3h3v-2h-3zm1-9H6c-1.1 0-2 .9-2 2v16c0 1.1.89 2 1.99 2H18c1.1 0 2-.9 2-2V8l-6-6zm4 18H6V4h7v5h5v11z"/></svg>
<svg class="i" style="left:921.0px;top:172.6px;width:48px;height:48px;" viewBox="0 0 24 24"><path fill="#d9453a" d="M17 3H5c-1.11 0-2 .9-2 2v14c0 1.1.89 2 2 2h14c1.1 0 2-.9 2-2V7l-4-4zm-5 16c-1.66 0-3-1.34-3-3s1.34-3 3-3 3 1.34 3 3-1.34 3-3 3zm3-10H5V5h10v4z"/></svg>
<svg class="i" style="left:1001.0px;top:172.0px;width:48px;height:48px;" viewBox="0 0 24 24"><path fill="#fff" d="M21 12.4V7l-4-4H5c-1.11 0-2 .9-2 2v14c0 1.1.89 2 2 2h7.4l8.6-8.6zM15 15c0 1.66-1.34 3-3 3s-3-1.34-3-3 1.34-3 3-3 3 1.34 3 3zM6 6h9v4H6V6zm13.99 10.25 1.77-1.77c.32-.32.32-.85 0-1.17l-1.06-1.06c-.32-.32-.85-.32-1.17 0l-1.77 1.77 2.23 2.23zm-.7.7L14.23 22H12v-2.23l5.06-5.06 2.23 2.24z"/></svg>
<svg class="i" style="left:1099.0px;top:172.0px;width:48px;height:48px;" viewBox="0 0 24 24"><path fill="#fff" d="M12.5 8c-2.65 0-5.05.99-6.9 2.6L2 7v9h9l-3.62-3.62c1.39-1.16 3.16-1.88 5.12-1.88 3.54 0 6.55 2.31 7.6 5.5l2.37-.78C21.08 11.03 17.15 8 12.5 8z"/></svg>
<svg class="i" style="left:1179.3px;top:172.0px;width:48px;height:48px;" viewBox="0 0 24 24"><path fill="#bdbdbd" d="M18.4 10.6C16.55 8.99 14.15 8 11.5 8c-4.65 0-8.58 3.03-9.96 7.22L3.9 16c1.05-3.19 4.05-5.5 7.6-5.5 1.95 0 3.73.72 5.12 1.88L13 16h9V7l-3.6 3.6z"/></svg>
<svg class="i" style="left:1276.8px;top:172.3px;width:48px;height:48px;" viewBox="0 0 24 24"><path fill="#fff" d="M18 16.08c-.76 0-1.44.3-1.96.77L8.91 12.7c.05-.23.09-.46.09-.7s-.04-.47-.09-.7l7.05-4.11c.54.5 1.25.81 2.04.81 1.66 0 3-1.34 3-3s-1.340-3-3-3-3 1.34-3 3c0 .24.04.47.09.7L8.04 9.81C7.5 9.31 6.79 9 6 9c-1.66 0-3 1.34-3 3s1.34 3 3 3c.79 0 1.5-.31 2.04-.81l7.12 4.16c-.05.21-.08.43-.08.65 0 1.61 1.31 2.92 2.92 2.92 1.61 0 2.92-1.31 2.92-2.92s-1.31-2.92-2.92-2.92z"/></svg>
<svg class="i" style="left:1357.4px;top:172.0px;width:48px;height:48px;" viewBox="0 0 24 24"><path fill="#cfcfcf" d="M12 8c1.1 0 2-.9 2-2s-.9-2-2-2-2 .9-2 2 .9 2 2 2zm0 2c-1.1 0-2 .9-2 2s.9 2 2 2 2-.9 2-2-.9-2-2-2zm0 6c-1.1 0-2 .9-2 2s.9 2 2 2 2-.9 2-2-.9-2-2-2z"/></svg>
<svg class="i" style="left:1405.7px;top:171.7px;width:48px;height:48px;" viewBox="0 0 24 24"><path fill="#cfcfcf" d="M7 10l5 5 5-5z"/></svg>
<div class="b" style="left:1504.0px;top:161.0px;width:96.0px;height:94.7px;background:rgba(128,128,128,0.6);border-radius:10px;box-shadow:0 3px 16px rgba(0,0,0,0.16);"></div>
<svg class="i" style="left:1527.4px;top:183.7px;width:48px;height:48px;" viewBox="0 0 24 24"><path fill="#ececec" d="M16.5 13c-1.2 0-3.07.34-4.5 1-1.43-.67-3.3-1-4.5-1C5.33 13 1 14.08 1 16.25V19h22v-2.75c0-2.17-4.33-3.25-6.5-3.25zm-4 4.5h-10v-1.25c0-.54 2.56-1.75 5-1.750s5 1.21 5 1.75v1.25zm9 0H14v-1.25c0-.46-.2-.86-.52-1.22.88-.3 1.96-.53 3.020-.53 2.44 0 5 1.21 5 1.75v1.25zM7.5 12c1.93 0 3.5-1.57 3.5-3.5S9.43 5 7.5 5 4 6.57 4 8.5 5.57 12 7.5 12zm0-5.5c1.1 0 2 .9 2 2s-.9 2-2 2-2-.9-2-2 .9-2 2-2zm9 5.5c1.93 0 3.5-1.57 3.5-3.5S18.43 5 16.5 5 13 6.57 13 8.5s1.57 3.5 3.5 3.5zm0-5.5c1.1 0 2 .9 2 2s-.9 2-2 2-2-.9-2-2 .9-2 2-2z"/></svg>
<div class="b" style="left:1504.3px;top:513.6px;width:95.2px;height:96.0px;background:rgba(25,118,210,0.20);border:1.8px solid #4a90d9;border-radius:10px;box-shadow:0 3px 10px rgba(0,0,0,0.22);"></div>
<div class="b" style="left:1504.3px;top:633.8px;width:95.2px;height:96.0px;background:rgba(156,39,176,0.20);border:1.8px solid #a040b0;border-radius:10px;box-shadow:0 3px 10px rgba(0,0,0,0.22);"></div>
<div class="b" style="left:1504.3px;top:754.0px;width:95.2px;height:96.0px;background:rgba(255,167,38,0.16);border:1.8px solid #e6aa3e;border-radius:10px;box-shadow:0 3px 10px rgba(0,0,0,0.22);"></div>
<div class="b" style="left:1504.3px;top:873.7px;width:95.2px;height:96.0px;background:rgba(25,118,210,0.18);border:1.8px solid #3a7abf;border-radius:10px;box-shadow:0 3px 10px rgba(0,0,0,0.22);"></div>
<div class="b" style="left:1504.3px;top:993.8px;width:95.2px;height:96.0px;background:rgba(255,152,0,0.16);border:1.8px solid #e8953a;border-radius:10px;box-shadow:0 3px 10px rgba(0,0,0,0.22);"></div>
<div class="b" style="left:1504.3px;top:1113.9px;width:95.2px;height:96.0px;background:rgba(76,175,80,0.18);border:1.8px solid #5cae5c;border-radius:10px;box-shadow:0 3px 10px rgba(0,0,0,0.22);"></div>
<svg class="i" style="left:1525.8px;top:549.5px;width:52.4px;height:24.8px;overflow:hidden" viewBox="0 0 72 32" preserveAspectRatio="none"><path d="M0 2.5 H19 C27 2.5 35 9.5 45 16 M0 29.5 H19 C27 29.5 35 22.5 45 16 M45 16 C53 10.5 61 3.2 78 1.6 M45 16 C53 21.5 61 28.8 78 30.4" fill="none" stroke="#fff" stroke-width="4.2"/><circle cx="45" cy="16" r="8.9" fill="#fff"/></svg>
<svg class="i" style="left:1531px;top:660.7px;width:42px;height:39px" viewBox="0 0 24 22"><rect x="1" y="3" width="22" height="18" rx="2" fill="none" stroke="#fff" stroke-width="2.2"/><rect x="10" y="0.4" width="4" height="3" rx="1" fill="#fff"/><g fill="#fff"><rect x="4.5" y="7" width="3.2" height="3.2" rx=".5"/><rect x="10.4" y="7" width="3.2" height="3.2" rx=".5"/><rect x="16.3" y="7" width="3.2" height="3.2" rx=".5"/><rect x="4.5" y="13.2" width="3.2" height="3.2" rx=".5"/><rect x="10.4" y="13.2" width="3.2" height="3.2" rx=".5"/><rect x="16.3" y="13.2" width="3.2" height="3.2" rx=".5"/></g></svg>
<svg class="i" style="left:1532.6px;top:782.4px;width:39.2px;height:39.2px" viewBox="0 0 40 40"><circle cx="20" cy="20" r="19.5" fill="#000"/><circle cx="20.00" cy="8.20" r="4.7" fill="#fff"/><circle cx="30.22" cy="14.10" r="4.7" fill="#fff"/><circle cx="30.22" cy="25.90" r="4.7" fill="#fff"/><circle cx="20.00" cy="31.80" r="4.7" fill="#fff"/><circle cx="9.78" cy="25.90" r="4.7" fill="#fff"/><circle cx="9.78" cy="14.10" r="4.7" fill="#fff"/></svg>
<svg class="i" style="left:1528.0px;top:897.7px;width:48px;height:48px;" viewBox="0 0 24 24"><path fill="#1565c0" d="M20 2H8c-1.1 0-2 .9-2 2v12c0 1.1.9 2 2 2h12c1.1 0 2-.9 2-2V4c0-1.1-.9-2-2-2zm-8.5 7.5c0 .83-.67 1.5-1.5 1.5H9v2H7.5V7H10c.83 0 1.5.67 1.5 1.5v1zm5 2c0 .83-.67 1.5-1.5 1.5h-2.5V7H15c.83 0 1.5.67 1.5 1.5v3zm4-3H19v1h1.5V11H19v2h-1.5V7h3v1.5zM9 9.5h1v-1H9v1zM4 6H2v14c0 1.1.9 2 2 2h14v-2H4V6zm10 5.5h1v-3h-1v3z"/></svg>
<svg class="i" style="left:1528.4px;top:1018.6px;width:48px;height:48px;" viewBox="0 0 24 24"><path fill="#ff9800" d="M19 9l1.25-2.75L23 5l-2.75-1.25L19 1l-1.25 2.75L15 5l2.75 1.25L19 9zm-7.5.5L9 4 6.5 9.5 1 12l5.5 2.5L9 20l2.5-5.5L17 12l-5.5-2.5zM19 15l-1.25 2.75L15 19l2.75 1.25L19 23l1.25-2.75L23 19l-2.75-1.25L19 15z"/></svg>
<svg class="i" style="left:1527.5px;top:1137.7px;width:48px;height:48px;" viewBox="0 0 24 24"><path fill="#4caf50" d="M3 10h11v2H3v-2zm0-2h11V6H3v2zm0 8h7v-2H3v2zm15.01-3.13.71-.71c.39-.39 1.02-.39 1.41 0l.71.71c.39.39.39 1.02 0 1.41l-.71.71-2.12-2.12zm-.71.71-5.3 5.3V21h2.12l5.3-5.3-2.12-2.12z"/></svg>
<div class="b" style="left:521.6px;top:1569.8px;width:596.7px;height:123.8px;background:#393939;border-radius:9px;box-shadow:0 0 0 1px rgba(90,90,90,0.6), 0 2px 6px rgba(0,0,0,0.25);"></div>
<div id="f17" class="t" style="left:572.2px;top:1617.3px;font-size:29px;line-height:29px;color:#fff;font-weight:400;transform:scaleX(0.9454);transform-origin:0 0;">Pending Wire</div>
<div class="b" style="left:773.3px;top:1611.2px;width:83.3px;height:41.0px;background:#000;border-radius:9px;"></div>
<div class="t" style="left:214.4px;width:1200px;text-align:center;top:1617.3px;"><span id="f18" style="display:inline-block;font-size:29px;line-height:29px;color:#fff;font-weight:400;transform:scaleX(0.9429);transform-origin:50% 0;">none</span></div>
<svg class="i" style="left:966.0px;top:1608.0px;width:48px;height:48px;" viewBox="0 0 24 24"><path fill="#fff" d="M12 8c1.1 0 2-.9 2-2s-.9-2-2-2-2 .9-2 2 .9 2 2 2zm0 2c-1.1 0-2 .9-2 2s.9 2 2 2 2-.9 2-2-.9-2-2-2zm0 6c-1.1 0-2 .9-2 2s.9 2 2 2 2-.9 2-2-.9-2-2-2z"/></svg>
<svg class="i" style="left:1030.0px;top:1608.0px;width:48px;height:48px;" viewBox="0 0 24 24"><path fill="#fff" d="M7 14l5-5 5 5z"/></svg>
<div class="b" style="left:40.2px;top:1616.3px;width:71.2px;height:71.0px;background:#393939;border:2px solid #4c4c4c;border-radius:10px;box-shadow:0 2px 8px rgba(0,0,0,0.25);"></div>
<div class="b" style="left:1529.0px;top:1528.4px;width:71.2px;height:71.0px;background:#393939;border:2px solid #4c4c4c;border-radius:10px;box-shadow:0 2px 8px rgba(0,0,0,0.25);"></div>
<div class="b" style="left:1529.0px;top:1616.2px;width:71.2px;height:71.0px;background:#393939;border:2px solid #4c4c4c;border-radius:10px;box-shadow:0 2px 8px rgba(0,0,0,0.25);"></div>
<svg class="i" style="left:57.3px;top:1633.4px;width:36px;height:36px;" viewBox="0 0 24 24"><path fill="#d0d0d0" d="M10 6L8.59 7.41 13.17 12l-4.58 4.59L10 18l6-6z"/></svg>
<svg class="i" style="left:1546.2px;top:1546.5px;width:36px;height:36px;" viewBox="0 0 24 24"><path fill="#fff" d="M19 6.41L17.59 5 12 10.59 6.41 5 5 6.41 10.59 12 5 17.59 6.41 19 12 13.41 17.59 19 19 17.59 13.41 12z"/></svg>
<svg class="i" style="left:1545.3px;top:1634.2px;width:36px;height:36px;" viewBox="0 0 24 24"><path fill="#cfcfcf" d="M10 6L8.59 7.41 13.17 12l-4.58 4.59L10 18l6-6z"/></svg>
<div class="b" style="left:0.0px;top:0.0px;width:3072.0px;height:100.0px;background:#2a2a2a;"></div>
<div class="b" style="left:0.0px;top:100.0px;width:3072.0px;height:2.0px;background:#6a6a6a;"></div>
<svg class="i" style="left:360px;top:34px;width:72px;height:32px;overflow:hidden" viewBox="0 0 72 32" preserveAspectRatio="none"><path d="M0 2.5 H19 C27 2.5 35 9.5 45 16 M0 29.5 H19 C27 29.5 35 22.5 45 16 M45 16 C53 10.5 61 3.2 78 1.6 M45 16 C53 21.5 61 28.8 78 30.4" fill="none" stroke="#fff" stroke-width="4.6"/><circle cx="45" cy="16" r="8.9" fill="#fff"/></svg>
<svg class="i" style="left:462px;top:20px;width:212px;height:60px" viewBox="0 0 212 60"><g fill="none" stroke="#fff" stroke-width="5.7" stroke-linejoin="round">
<path d="M44.2 18.6 H12.3 Q6.8 18.6 6.8 24.2 Q6.8 29.8 12.3 29.8 H35.6 Q41.1 29.8 41.1 35.45 Q41.1 41.1 35.6 41.1 H4"/>
<path d="M51.1 55.4 V18.6 H79.4 Q84.9 18.6 84.9 24.1 V35.6 Q84.9 41.1 79.4 41.1 H51.1"/>
<path d="M95.4 4.4 V35.6 Q95.4 41.1 100.9 41.1 H112.6"/>
<path d="M118.95 4.4 V10.9 M118.95 16.1 V44"/>
<path d="M165.2 18.6 H135.5 Q130 18.6 130 24.1 V35.6 Q130 41.1 135.5 41.1 H165.4"/>
<path d="M206.7 41.1 H176.6 Q171.1 41.1 171.1 35.6 V24.1 Q171.1 18.6 176.6 18.6 H199.25 Q204.75 18.6 204.75 24.1 V30 H171.1"/>
</g></svg>
<div id="f19" class="t" style="left:1972.9px;top:35.5px;font-size:28px;line-height:28px;color:#fff;font-weight:400;transform:scaleX(0.9977);transform-origin:0 0;">Builder</div>
<svg class="i" style="left:2066.0px;top:32.8px;width:28px;height:28px;" viewBox="0 0 24 24"><path fill="#fff" d="M7 10l5 5 5-5z"/></svg>
<div id="f20" class="t" style="left:2131.8px;top:35.5px;font-size:28px;line-height:28px;color:#fff;font-weight:400;transform:scaleX(0.9733);transform-origin:0 0;">Reference</div>
<svg class="i" style="left:2264.0px;top:32.8px;width:28px;height:28px;" viewBox="0 0 24 24"><path fill="#fff" d="M7 10l5 5 5-5z"/></svg>
<div id="f21" class="t" style="left:2328.6px;top:35.5px;font-size:28px;line-height:28px;color:#fff;font-weight:400;transform:scaleX(0.9925);transform-origin:0 0;">Parts Library</div>
<div id="f22" class="t" style="left:2534.1px;top:35.5px;font-size:28px;line-height:28px;color:#fff;font-weight:400;transform:scaleX(1.0266);transform-origin:0 0;">Blog</div>
<svg class="i" style="left:2648.0px;top:26.0px;width:48px;height:48px;" viewBox="0 0 24 24"><path fill="#fff" d="M12 12c2.21 0 4-1.79 4-4s-1.79-4-4-4-4 1.79-4 4 1.79 4 4 4zm0 2c-2.67 0-8 1.34-8 4v2h16v-2c0-2.66-5.33-4-8-4z"/></svg>
<div class="b" style="left:1640.0px;top:102.0px;width:1432.0px;height:1626.0px;background:#2a2a2a;"></div>
<div class="b" style="left:1640.0px;top:102.0px;width:2.0px;height:1626.0px;background:#4a4a4a;"></div>
<div class="b" style="left:1640.0px;top:874.0px;width:3.4px;height:79.5px;background:#5c5c5c;border-radius:2px;"></div>
<div class="b" style="left:1642.0px;top:189.5px;width:1430.0px;height:1.6px;background:#484848;"></div>
<svg class="i" style="left:1688.7px;top:133.7px;width:22.7px;height:20.9px" viewBox="0 0 24 22"><rect x="1" y="3" width="22" height="18" rx="2" fill="none" stroke="#fff" stroke-width="1.7"/><rect x="10" y="0.4" width="4" height="3" rx="1" fill="#fff"/><g fill="#fff"><rect x="4.5" y="7" width="3.2" height="3.2" rx=".5"/><rect x="10.4" y="7" width="3.2" height="3.2" rx=".5"/><rect x="16.3" y="7" width="3.2" height="3.2" rx=".5"/><rect x="4.5" y="13.2" width="3.2" height="3.2" rx=".5"/><rect x="10.4" y="13.2" width="3.2" height="3.2" rx=".5"/><rect x="16.3" y="13.2" width="3.2" height="3.2" rx=".5"/></g></svg>
<div id="f23" class="t" style="left:1721.5px;top:132.4px;font-size:23px;line-height:23px;color:#a6a6a6;font-weight:400;-webkit-text-stroke:0.58px #a6a6a6;transform:scaleX(1.0493);transform-origin:0 0;">Components</div>
<svg class="i" style="left:1906.9px;top:138.7px;width:28.1px;height:12.4px;overflow:hidden" viewBox="0 0 72 32" preserveAspectRatio="none"><path d="M0 2.5 H19 C27 2.5 35 9.5 45 16 M0 29.5 H19 C27 29.5 35 22.5 45 16 M45 16 C53 10.5 61 3.2 78 1.6 M45 16 C53 21.5 61 28.8 78 30.4" fill="none" stroke="#fff" stroke-width="4.0"/><circle cx="45" cy="16" r="8.9" fill="#fff"/></svg>
<div id="f24" class="t" style="left:1944.8px;top:132.4px;font-size:23px;line-height:23px;color:#a6a6a6;font-weight:400;-webkit-text-stroke:0.58px #a6a6a6;transform:scaleX(0.9967);transform-origin:0 0;">Wires</div>
<svg class="i" style="left:2055.6px;top:134.3px;width:20.7px;height:20.7px" viewBox="0 0 40 40"><circle cx="20" cy="20" r="19.5" fill="#000"/><circle cx="20.00" cy="8.20" r="4.7" fill="#fff"/><circle cx="30.22" cy="14.10" r="4.7" fill="#fff"/><circle cx="30.22" cy="25.90" r="4.7" fill="#fff"/><circle cx="20.00" cy="31.80" r="4.7" fill="#fff"/><circle cx="9.78" cy="25.90" r="4.7" fill="#fff"/><circle cx="9.78" cy="14.10" r="4.7" fill="#fff"/></svg>
<div id="f25" class="t" style="left:2087.3px;top:132.4px;font-size:23px;line-height:23px;color:#a6a6a6;font-weight:400;-webkit-text-stroke:0.58px #a6a6a6;transform:scaleX(1.0259);transform-origin:0 0;">Cables</div>
<svg class="i" style="left:2209.6px;top:131.1px;width:28px;height:28px;" viewBox="0 0 24 24"><path fill="#a6a6a6" d="M19 9l1.25-2.75L23 5l-2.75-1.25L19 1l-1.25 2.75L15 5l2.75 1.25L19 9zm-7.5.5L9 4 6.5 9.5 1 12l5.5 2.5L9 20l2.5-5.5L17 12l-5.5-2.5zM19 15l-1.25 2.75L15 19l2.75 1.25L19 23l1.25-2.75L23 19l-2.75-1.25L19 15z"/></svg>
<div id="f26" class="t" style="left:2245.6px;top:132.4px;font-size:23px;line-height:23px;color:#a6a6a6;font-weight:400;-webkit-text-stroke:0.58px #a6a6a6;transform:scaleX(1.0106);transform-origin:0 0;">AI Generator</div>
<svg class="i" style="left:2427.9px;top:130.6px;width:28px;height:28px;" viewBox="0 0 24 24"><path fill="#a6a6a6" d="M20 2H8c-1.1 0-2 .9-2 2v12c0 1.1.9 2 2 2h12c1.1 0 2-.9 2-2V4c0-1.1-.9-2-2-2zm-8.5 7.5c0 .83-.67 1.5-1.5 1.5H9v2H7.5V7H10c.83 0 1.5.67 1.5 1.5v1zm5 2c0 .83-.67 1.5-1.5 1.5h-2.5V7H15c.83 0 1.5.67 1.5 1.5v3zm4-3H19v1h1.5V11H19v2h-1.5V7h3v1.5zM9 9.5h1v-1H9v1zM4 6H2v14c0 1.1.9 2 2 2h14v-2H4V6zm10 5.5h1v-3h-1v3z"/></svg>
<div id="f27" class="t" style="left:2463.7px;top:132.4px;font-size:23px;line-height:23px;color:#a6a6a6;font-weight:400;-webkit-text-stroke:0.58px #a6a6a6;transform:scaleX(0.9880);transform-origin:0 0;">PDF Pages</div>
<div class="b" style="left:2607.5px;top:114.6px;width:194.7px;height:59.6px;background:#27374d;border:2px solid #2c5282;border-radius:10px;"></div>
<svg class="i" style="left:2629.1px;top:130.2px;width:28px;height:28px;" viewBox="0 0 24 24"><path fill="#fff" d="M3 10h11v2H3v-2zm0-2h11V6H3v2zm0 8h7v-2H3v2zm15.01-3.13.71-.71c.39-.39 1.02-.39 1.41 0l.71.71c.39.39.39 1.02 0 1.41l-.71.71-2.12-2.12zm-.71.71-5.3 5.3V21h2.12l5.3-5.3-2.12-2.12z"/></svg>
<div id="f28" class="t" style="left:2664.8px;top:132.4px;font-size:23px;line-height:23px;color:#fff;font-weight:400;-webkit-text-stroke:0.58px #fff;transform:scaleX(1.0329);transform-origin:0 0;">Bulk Editor</div>
<svg class="i" style="left:2855.5px;top:126.0px;width:40px;height:40px;transform:scale(1.05,1.0);" viewBox="0 0 24 24"><path fill="#2f74c0" d="M16 9V4h1c.55 0 1-.45 1-1s-.45-1-1-1H7c-.55 0-1 .45-1 1s.45 1 1 1h1v5c0 1.66-1.34 3-3 3v2h5.97v7l1 1 1-1v-7H19v-2c-1.66 0-3-1.34-3-3z"/></svg>
<svg class="i" style="left:2934px;top:135px;width:28px;height:18px" viewBox="0 0 28 18"><g fill="#cfcfcf"><rect x="6" y="1" width="21" height="3.2"/><rect x="3" y="7" width="21" height="3.2"/><rect x="0" y="13" width="21" height="3.2"/></g></svg>
<svg class="i" style="left:3010px;top:134px;width:20px;height:20px" viewBox="0 0 20 20"><path d="M1.5 1.5 L18.5 18.5 M18.5 1.5 L1.5 18.5" stroke="#cfcfcf" stroke-width="3"/></svg>
<div class="b" style="left:1666.4px;top:214.7px;width:1381.1px;height:115.9px;background:#303030;border-radius:10px;"></div>
<div class="b" style="left:2056.0px;top:238.9px;width:136.5px;height:68.1px;background:#2c4763;border-radius:13px;"></div>
<div id="f29" class="t" style="left:1729.1px;top:261.1px;font-size:24px;line-height:24px;color:#a0a0a0;font-weight:400;-webkit-text-stroke:0.60px #a0a0a0;transform:scaleX(1.0089);transform-origin:0 0;">Components</div>
<div id="f30" class="t" style="left:1946.7px;top:261.1px;font-size:24px;line-height:24px;color:#a0a0a0;font-weight:400;-webkit-text-stroke:0.60px #a0a0a0;transform:scaleX(0.9805);transform-origin:0 0;">Wires</div>
<div id="f31" class="t" style="left:2088.0px;top:261.1px;font-size:24px;line-height:24px;color:#fff;font-weight:400;-webkit-text-stroke:0.60px #fff;transform:scaleX(0.9708);transform-origin:0 0;">Cables</div>
<div id="f32" class="t" style="left:2240.9px;top:261.1px;font-size:24px;line-height:24px;color:#a0a0a0;font-weight:400;-webkit-text-stroke:0.60px #a0a0a0;transform:scaleX(0.9977);transform-origin:0 0;">Bundles</div>
<div id="f33" class="t" style="left:2408.1px;top:261.1px;font-size:24px;line-height:24px;color:#a0a0a0;font-weight:400;-webkit-text-stroke:0.60px #a0a0a0;transform:scaleX(1.0124);transform-origin:0 0;">Accessories</div>
<div class="b" style="left:1666.4px;top:347.0px;width:1381.1px;height:71.0px;background:#303030;border-radius:10px;"></div>
<div id="f34" class="t" style="left:1681.4px;top:366.4px;font-size:25px;line-height:25px;color:#b4b4b4;font-weight:400;transform:scaleX(1.0426);transform-origin:0 0;">3 cable(s)</div>
<svg class="i" style="left:2666.6px;top:361.3px;width:36px;height:36px;" viewBox="0 0 24 24"><path fill="#fff" d="M2 17h2v.5H3v1h1v.5H2v1h3v-4H2v1zm1-9h1V4H2v1h1v3zm-1 3h1.8L2 13.1v.9h3v-1H3.2L5 10.9V10H2v1zm5-6v2h14V5H7zm0 14h14v-2H7v2zm0-6h14v-2H7v2z"/></svg>
<div id="f35" class="t" style="left:2715.6px;top:369.3px;font-size:20px;line-height:20px;color:#f0f0f0;font-weight:400;-webkit-text-stroke:0.50px #f0f0f0;transform:scaleX(0.9125);transform-origin:0 0;">AUTO RENUMBER</div>
<svg class="i" style="left:2893.3px;top:361.1px;width:33.4px;height:33.4px;" viewBox="0 0 24 24"><path fill="#fff" d="M7 10l5 5 5-5z"/></svg>
<svg class="i" style="left:2945.3px;top:361.0px;width:36px;height:36px;" viewBox="0 0 24 24"><path fill="#fff" d="M12 5.83L15.17 9l1.41-1.41L12 3 7.41 7.59 8.83 9 12 5.83zm0 12.34L8.83 15l-1.41 1.41L12 21l4.59-4.59L15.17 15 12 18.170z"/></svg>
<svg class="i" style="left:2999.5px;top:361.0px;width:36px;height:36px;" viewBox="0 0 24 24"><path fill="#fff" d="M7.41 18.59L8.83 20 12 16.83 15.17 20l1.41-1.41L12 14l-4.59 4.59zm9.18-13.18L15.17 4 12 7.17 8.83 4 7.41 5.41 12 10l4.59-4.59z"/></svg>
<div style="position:absolute;left:1642px;top:423px;width:1430px;height:1140.7px;overflow:hidden;"><div style="position:absolute;left:-1642px;top:-423px;width:3072px;height:1728px;">
<div class="b" style="left:1666.4px;top:427.0px;width:1356.6px;height:95.0px;background:#303030;border-radius:10px;"></div>
<svg class="i" style="left:1680.3px;top:457.7px;width:33.4px;height:33.4px;" viewBox="0 0 24 24"><path fill="#fff" d="M16.59 8.59L12 13.17 7.41 8.59 6 10l6 6 6-6z"/></svg>
<div class="b" style="left:1736.7px;top:435.7px;width:138.2px;height:77.8px;background:#252525;border:2px solid #3d3d3d;border-radius:9px;"></div>
<div id="f36" class="t" style="left:1754.0px;top:465.0px;font-size:23.5px;line-height:23.5px;color:#e8e8e8;font-weight:700;transform:scaleX(0.9071);transform-origin:0 0;">C1</div>
<div class="b" style="left:1884.6px;top:435.7px;width:199.5px;height:77.8px;background:#252525;border:2px solid #3d3d3d;border-radius:9px;"></div>
<div id="f37" class="t" style="left:1900.2px;top:464.6px;font-size:24px;line-height:24px;color:#e0e0e0;font-weight:400;transform:scaleX(1.0231);transform-origin:0 0;">Igus</div>
<div class="b" style="left:2093.6px;top:435.7px;width:200.1px;height:77.8px;background:#252525;border:2px solid #3d3d3d;border-radius:9px;"></div>
<div id="f38" class="t" style="left:2111.1px;top:464.6px;font-size:24px;line-height:24px;color:#e0e0e0;font-weight:400;transform:scaleX(0.9485);transform-origin:0 0;">CFBUS-020</div>
<div class="b" style="left:2303.7px;top:435.7px;width:218.5px;height:77.8px;background:#252525;border:2px solid #3d3d3d;border-radius:9px;"></div>
<div class="t" style="left:1237.3px;width:1200px;text-align:right;top:464.6px;"><span id="f39" style="display:inline-block;font-size:24px;line-height:24px;color:#e0e0e0;font-weight:400;transform:scaleX(1.0585);transform-origin:100% 0;">24</span></div>
<div id="f40" class="t" style="left:2482.1px;top:464.6px;font-size:24px;line-height:24px;color:#9a9a9a;font-weight:400;transform:scaleX(1.0145);transform-origin:0 0;">in</div>
<div class="b" style="left:2547.2px;top:459.9px;width:80.6px;height:30.0px;background:#3c3c3c;border-radius:15px;"></div>
<div class="t" style="left:1987.7px;width:1200px;text-align:center;top:464.4px;"><span id="f41" style="display:inline-block;font-size:20px;line-height:20px;color:#eee;font-weight:400;transform:scaleX(0.9819);transform-origin:50% 0;">4 cores</span></div>
<div class="b" style="left:2652.0px;top:459.9px;width:93.1px;height:30.0px;background:#ffa726;border-radius:8px;"></div>
<div class="t" style="left:2098.9px;width:1200px;text-align:center;top:464.4px;"><span id="f42" style="display:inline-block;font-size:20px;line-height:20px;color:#1c1c1c;font-weight:400;transform:scaleX(1.0005);transform-origin:50% 0;">Shielded</span></div>
<svg class="i" style="left:2975.2px;top:456.5px;width:36px;height:36px;" viewBox="0 0 24 24"><path fill="#fff" d="M12 8c-2.21 0-4 1.79-4 4s1.79 4 4 4 4-1.79 4-4-1.79-4-4-4zm-7 7H3v4c0 1.1.9 2 2 2h4v-2H5v-4zM5 5h4V3H5c-1.1 0-2 .9-2 2v4h2V5zm14-2h-4v2h4v4h2V5c0-1.1-.9-2-2-2zm0 16h-4v2h4c1.1 0 2-.9 2-2v-4h-2v4z"/></svg>
<div id="f43" class="t" style="left:1697.9px;top:536.1px;font-size:20px;line-height:20px;color:#a8a8a8;font-weight:700;transform:scaleX(0.8879);transform-origin:0 0;">CORE</div>
<div id="f44" class="t" style="left:1797.9px;top:536.1px;font-size:20px;line-height:20px;color:#a8a8a8;font-weight:700;transform:scaleX(0.8692);transform-origin:0 0;">COLOR</div>
<div class="b" style="left:1873.9px;top:538.5px;width:2.0px;height:15.0px;background:#555;"></div>
<div class="t" style="left:1561.6px;width:1200px;text-align:center;top:536.1px;"><span id="f45" style="display:inline-block;font-size:20px;line-height:20px;color:#a8a8a8;font-weight:700;transform:scaleX(0.9212);transform-origin:50% 0;">SIGNAL 1</span></div>
<div class="b" style="left:2449.0px;top:538.5px;width:2.0px;height:15.0px;background:#555;"></div>
<div class="t" style="left:2137.2px;width:1200px;text-align:center;top:536.1px;"><span id="f46" style="display:inline-block;font-size:20px;line-height:20px;color:#a8a8a8;font-weight:700;transform:scaleX(0.9473);transform-origin:50% 0;">SIGNAL 2</span></div>
<div class="b" style="left:1682.0px;top:569.5px;width:1341.0px;height:95.0px;background:#303030;border-radius:10px;"></div>
<div class="t" style="left:1699.0px;top:605.3px;font-size:24px;line-height:24px;color:#e6e6e6;font-weight:400;-webkit-text-stroke:0.60px #e6e6e6;">1</div>
<div class="b" style="left:1799.8px;top:601.2px;width:32.0px;height:32.0px;background:#ffffff;border-radius:5px;border:1px solid rgba(0,0,0,0.25);"></div>
<div class="b" style="left:1873.9px;top:585.3px;width:2.0px;height:63.1px;background:#4e4e4e;"></div>
<div id="f47" class="t" style="left:1892.8px;top:607.7px;font-size:19.5px;line-height:19.5px;color:#9c9c9c;font-weight:400;transform:scaleX(0.9749);transform-origin:0 0;">X4.1</div>
<div class="b" style="left:1980.5px;top:577.8px;width:451.9px;height:77.8px;background:#252525;border:2px solid #3d3d3d;border-radius:9px;"></div>
<div id="f48" class="t" style="left:2001.9px;top:606.7px;font-size:24px;line-height:24px;color:#c8c8c8;font-weight:400;transform:scaleX(1.0127);transform-origin:0 0;">Signal</div>
<div class="b" style="left:2449.0px;top:585.3px;width:2.0px;height:63.1px;background:#4e4e4e;"></div>
<div id="f49" class="t" style="left:2467.9px;top:607.7px;font-size:19.5px;line-height:19.5px;color:#9c9c9c;font-weight:400;transform:scaleX(0.9798);transform-origin:0 0;">X3.1</div>
<div class="b" style="left:2555.5px;top:577.8px;width:451.5px;height:77.8px;background:#252525;border:2px solid #3d3d3d;border-radius:9px;"></div>
<svg class="i" style="left:2569.2px;top:601.2px;width:36px;height:36px;" viewBox="0 0 24 24"><path fill="#cfcfcf" d="M3.9 12c0-1.71 1.39-3.1 3.1-3.1h4V7H7c-2.76 0-5 2.24-5 5s2.24 5 5 5h4v-1.9H7c-1.71 0-3.1-1.39-3.1-3.1zM8 13h8v-2H8v2zm9-6h-4v1.9h4c1.71 0 3.1 1.39 3.1 3.1s-1.39 3.1-3.1 3.1h-4V17h4c2.76 0 5-2.24 5-5s-2.24-5-5-5z"/></svg>
<div id="f50" class="t" style="left:2624.2px;top:606.7px;font-size:24px;line-height:24px;color:#c8c8c8;font-weight:400;transform:scaleX(1.0124);transform-origin:0 0;">Signal</div>
<div class="t" style="left:1699.0px;top:701.2px;font-size:24px;line-height:24px;color:#e6e6e6;font-weight:400;-webkit-text-stroke:0.60px #e6e6e6;">2</div>
<div class="b" style="left:1799.8px;top:697.1px;width:32.0px;height:32.0px;background:#00ff00;border-radius:5px;border:1px solid rgba(0,0,0,0.25);"></div>
<div class="b" style="left:1873.9px;top:681.2px;width:2.0px;height:63.1px;background:#4e4e4e;"></div>
<div id="f51" class="t" style="left:1892.8px;top:703.6px;font-size:19.5px;line-height:19.5px;color:#9c9c9c;font-weight:400;transform:scaleX(0.9749);transform-origin:0 0;">X3.2</div>
<div class="b" style="left:1980.5px;top:673.7px;width:451.9px;height:77.8px;background:#252525;border:2px solid #3d3d3d;border-radius:9px;"></div>
<div id="f52" class="t" style="left:2001.9px;top:702.6px;font-size:24px;line-height:24px;color:#c8c8c8;font-weight:400;transform:scaleX(1.0127);transform-origin:0 0;">Signal</div>
<div class="b" style="left:2449.0px;top:681.2px;width:2.0px;height:63.1px;background:#4e4e4e;"></div>
<div id="f53" class="t" style="left:2467.9px;top:703.6px;font-size:19.5px;line-height:19.5px;color:#9c9c9c;font-weight:400;transform:scaleX(0.9798);transform-origin:0 0;">X4.2</div>
<div class="b" style="left:2555.5px;top:673.7px;width:451.5px;height:77.8px;background:#252525;border:2px solid #3d3d3d;border-radius:9px;"></div>
<svg class="i" style="left:2569.2px;top:697.1px;width:36px;height:36px;" viewBox="0 0 24 24"><path fill="#cfcfcf" d="M3.9 12c0-1.71 1.39-3.1 3.1-3.1h4V7H7c-2.76 0-5 2.24-5 5s2.24 5 5 5h4v-1.9H7c-1.71 0-3.1-1.39-3.1-3.1zM8 13h8v-2H8v2zm9-6h-4v1.9h4c1.71 0 3.1 1.39 3.1 3.1s-1.39 3.1-3.1 3.1h-4V17h4c2.76 0 5-2.24 5-5s-2.24-5-5-5z"/></svg>
<div id="f54" class="t" style="left:2624.2px;top:702.6px;font-size:24px;line-height:24px;color:#c8c8c8;font-weight:400;transform:scaleX(1.0124);transform-origin:0 0;">Signal</div>
<div class="t" style="left:1699.0px;top:797.1px;font-size:24px;line-height:24px;color:#e6e6e6;font-weight:400;-webkit-text-stroke:0.60px #e6e6e6;">3</div>
<div class="b" style="left:1799.8px;top:793.0px;width:32.0px;height:32.0px;background:#a52a2a;border-radius:5px;border:1px solid rgba(0,0,0,0.25);"></div>
<div class="b" style="left:1873.9px;top:777.1px;width:2.0px;height:63.1px;background:#4e4e4e;"></div>
<div id="f55" class="t" style="left:1892.8px;top:799.5px;font-size:19.5px;line-height:19.5px;color:#9c9c9c;font-weight:400;transform:scaleX(0.9749);transform-origin:0 0;">X4.3</div>
<div class="b" style="left:1980.5px;top:769.6px;width:451.9px;height:77.8px;background:#252525;border:2px solid #3d3d3d;border-radius:9px;"></div>
<div id="f56" class="t" style="left:2001.9px;top:798.5px;font-size:24px;line-height:24px;color:#c8c8c8;font-weight:400;transform:scaleX(1.0127);transform-origin:0 0;">Signal</div>
<div class="b" style="left:2449.0px;top:777.1px;width:2.0px;height:63.1px;background:#4e4e4e;"></div>
<div id="f57" class="t" style="left:2467.9px;top:799.5px;font-size:19.5px;line-height:19.5px;color:#9c9c9c;font-weight:400;transform:scaleX(0.9546);transform-origin:0 0;">X3.3</div>
<div class="b" style="left:2555.5px;top:769.6px;width:451.5px;height:77.8px;background:#252525;border:2px solid #3d3d3d;border-radius:9px;"></div>
<svg class="i" style="left:2569.2px;top:793.0px;width:36px;height:36px;" viewBox="0 0 24 24"><path fill="#cfcfcf" d="M3.9 12c0-1.71 1.39-3.1 3.1-3.1h4V7H7c-2.76 0-5 2.24-5 5s2.24 5 5 5h4v-1.9H7c-1.71 0-3.1-1.39-3.1-3.1zM8 13h8v-2H8v2zm9-6h-4v1.9h4c1.71 0 3.1 1.39 3.1 3.1s-1.39 3.1-3.1 3.1h-4V17h4c2.76 0 5-2.24 5-5s-2.24-5-5-5z"/></svg>
<div id="f58" class="t" style="left:2624.2px;top:798.5px;font-size:24px;line-height:24px;color:#c8c8c8;font-weight:400;transform:scaleX(1.0124);transform-origin:0 0;">Signal</div>
<div class="t" style="left:1699.0px;top:893.0px;font-size:24px;line-height:24px;color:#e6e6e6;font-weight:400;-webkit-text-stroke:0.60px #e6e6e6;">4</div>
<div class="b" style="left:1799.8px;top:888.9px;width:32.0px;height:32.0px;background:#ffff00;border-radius:5px;border:1px solid rgba(0,0,0,0.25);"></div>
<div class="b" style="left:1873.9px;top:873.0px;width:2.0px;height:63.1px;background:#4e4e4e;"></div>
<div id="f59" class="t" style="left:1892.8px;top:895.4px;font-size:19.5px;line-height:19.5px;color:#9c9c9c;font-weight:400;transform:scaleX(0.9749);transform-origin:0 0;">X3.4</div>
<div class="b" style="left:1980.5px;top:865.5px;width:451.9px;height:77.8px;background:#252525;border:2px solid #3d3d3d;border-radius:9px;"></div>
<div id="f60" class="t" style="left:2001.9px;top:894.4px;font-size:24px;line-height:24px;color:#c8c8c8;font-weight:400;transform:scaleX(1.0127);transform-origin:0 0;">Signal</div>
<div class="b" style="left:2449.0px;top:873.0px;width:2.0px;height:63.1px;background:#4e4e4e;"></div>
<div id="f61" class="t" style="left:2467.9px;top:895.4px;font-size:19.5px;line-height:19.5px;color:#9c9c9c;font-weight:400;transform:scaleX(0.9553);transform-origin:0 0;">X4.4</div>
<div class="b" style="left:2555.5px;top:865.5px;width:451.5px;height:77.8px;background:#252525;border:2px solid #3d3d3d;border-radius:9px;"></div>
<svg class="i" style="left:2569.2px;top:888.9px;width:36px;height:36px;" viewBox="0 0 24 24"><path fill="#cfcfcf" d="M3.9 12c0-1.71 1.39-3.1 3.1-3.1h4V7H7c-2.76 0-5 2.24-5 5s2.24 5 5 5h4v-1.9H7c-1.71 0-3.1-1.39-3.1-3.1zM8 13h8v-2H8v2zm9-6h-4v1.9h4c1.71 0 3.1 1.39 3.1 3.1s-1.39 3.1-3.1 3.1h-4V17h4c2.76 0 5-2.24 5-5s-2.24-5-5-5z"/></svg>
<div id="f62" class="t" style="left:2624.2px;top:894.4px;font-size:24px;line-height:24px;color:#c8c8c8;font-weight:400;transform:scaleX(1.0124);transform-origin:0 0;">Signal</div>
<div id="f63" class="t" style="left:1698.8px;top:988.9px;font-size:24px;line-height:24px;color:#e6e6e6;font-weight:400;-webkit-text-stroke:0.60px #e6e6e6;transform:scaleX(0.9820);transform-origin:0 0;">Shield</div>
<div class="b" style="left:1799.8px;top:984.8px;width:32.0px;height:32.0px;background:#c4c4c4;border-radius:5px;border:1px solid rgba(0,0,0,0.25);"></div>
<div class="b" style="left:1873.9px;top:968.9px;width:2.0px;height:63.1px;background:#4e4e4e;"></div>
<div id="f64" class="t" style="left:1891.8px;top:991.3px;font-size:19.5px;line-height:19.5px;color:#9c9c9c;font-weight:400;transform:scaleX(0.9830);transform-origin:0 0;">FL-TIN</div>
<div class="b" style="left:1980.5px;top:961.4px;width:451.9px;height:77.8px;background:#252525;border:2px solid #3d3d3d;border-radius:9px;"></div>
<div id="f65" class="t" style="left:2001.9px;top:990.3px;font-size:24px;line-height:24px;color:#c8c8c8;font-weight:400;transform:scaleX(1.0127);transform-origin:0 0;">Signal</div>
<div class="b" style="left:2449.0px;top:968.9px;width:2.0px;height:63.1px;background:#4e4e4e;"></div>
<div class="t" style="left:2467.7px;top:991.3px;font-size:19.5px;line-height:19.5px;color:#9c9c9c;font-weight:400;">–</div>
<div class="b" style="left:2555.5px;top:961.4px;width:451.5px;height:77.8px;background:#252525;border:2px solid #3d3d3d;border-radius:9px;"></div>
<svg class="i" style="left:2569.2px;top:984.8px;width:36px;height:36px;" viewBox="0 0 24 24"><path fill="#cfcfcf" d="M3.9 12c0-1.71 1.39-3.1 3.1-3.1h4V7H7c-2.76 0-5 2.24-5 5s2.24 5 5 5h4v-1.9H7c-1.71 0-3.1-1.39-3.1-3.1zM8 13h8v-2H8v2zm9-6h-4v1.9h4c1.71 0 3.1 1.39 3.1 3.1s-1.39 3.1-3.1 3.1h-4V17h4c2.76 0 5-2.24 5-5s-2.24-5-5-5z"/></svg>
<div id="f66" class="t" style="left:2624.2px;top:990.3px;font-size:24px;line-height:24px;color:#c8c8c8;font-weight:400;transform:scaleX(1.0124);transform-origin:0 0;">Signal</div>
<svg style="position:absolute;left:1681px;top:1064px;" width="1343" height="4"><line x1="0" y1="1.7" x2="1343" y2="1.7" stroke="#525252" stroke-width="1.8" stroke-dasharray="10 8"/></svg>
<div id="f67" class="t" style="left:1730.1px;top:1096.4px;font-size:19.5px;line-height:19.5px;color:#a0a0a0;font-weight:700;transform:scaleX(0.9562);transform-origin:0 0;">STRIP LENGTHS</div>
<div id="f68" class="t" style="left:1730.1px;top:1138.7px;font-size:19.5px;line-height:19.5px;color:#a0a0a0;font-weight:700;transform:scaleX(0.9372);transform-origin:0 0;">CONNECTOR</div>
<div id="f69" class="t" style="left:1913.2px;top:1138.7px;font-size:19.5px;line-height:19.5px;color:#a0a0a0;font-weight:700;transform:scaleX(0.9250);transform-origin:0 0;">END</div>
<div id="f70" class="t" style="left:1976.1px;top:1138.7px;font-size:19.5px;line-height:19.5px;color:#a0a0a0;font-weight:700;transform:scaleX(0.9344);transform-origin:0 0;">JACKET</div>
<div id="f71" class="t" style="left:2124.4px;top:1138.7px;font-size:19.5px;line-height:19.5px;color:#a0a0a0;font-weight:700;transform:scaleX(0.9373);transform-origin:0 0;">SHIELD</div>
<div id="f72" class="t" style="left:2271.1px;top:1138.7px;font-size:19.5px;line-height:19.5px;color:#a0a0a0;font-weight:700;transform:scaleX(0.9762);transform-origin:0 0;">INSUL</div>
<div id="f73" class="t" style="left:2420.5px;top:1138.7px;font-size:19.5px;line-height:19.5px;color:#a0a0a0;font-weight:700;transform:scaleX(0.8913);transform-origin:0 0;">CORE</div>
<div id="f74" class="t" style="left:1730.1px;top:1200.4px;font-size:23.5px;line-height:23.5px;color:#dedede;font-weight:400;transform:scaleX(0.9934);transform-origin:0 0;">X4</div>
<div class="t" style="left:1333.2px;width:1200px;text-align:center;top:1200.4px;"><span style="display:inline-block;font-size:23.5px;line-height:23.5px;color:#dedede;font-weight:400;">A</span></div>
<div class="b" style="left:1976.9px;top:1171.8px;width:137.8px;height:77.7px;background:#252525;border:2px solid #3d3d3d;border-radius:9px;"></div>
<div class="t" style="left:823.6px;width:1200px;text-align:right;top:1200.4px;"><span id="f75" style="display:inline-block;font-size:23.5px;line-height:23.5px;color:#e6e6e6;font-weight:400;transform:scaleX(0.9687);transform-origin:100% 0;">25</span></div>
<div id="f76" class="t" style="left:2069.9px;top:1201.7px;font-size:22px;line-height:22px;color:#8e8e8e;font-weight:400;transform:scaleX(1.0063);transform-origin:0 0;">mm</div>
<div class="b" style="left:2125.0px;top:1171.8px;width:137.8px;height:77.7px;background:#252525;border:2px solid #3d3d3d;border-radius:9px;"></div>
<div class="t" style="left:971.3px;width:1200px;text-align:right;top:1200.4px;"><span id="f77" style="display:inline-block;font-size:23.5px;line-height:23.5px;color:#e6e6e6;font-weight:400;transform:scaleX(0.9628);transform-origin:100% 0;">–</span></div>
<div id="f78" class="t" style="left:2217.6px;top:1201.7px;font-size:22px;line-height:22px;color:#8e8e8e;font-weight:400;transform:scaleX(1.0063);transform-origin:0 0;">mm</div>
<div class="b" style="left:2273.1px;top:1171.8px;width:137.8px;height:77.7px;background:#252525;border:2px solid #3d3d3d;border-radius:9px;"></div>
<div class="t" style="left:1120.0px;width:1200px;text-align:right;top:1200.4px;"><span id="f79" style="display:inline-block;font-size:23.5px;line-height:23.5px;color:#e6e6e6;font-weight:400;transform:scaleX(0.9613);transform-origin:100% 0;">10</span></div>
<div id="f80" class="t" style="left:2366.3px;top:1201.7px;font-size:22px;line-height:22px;color:#8e8e8e;font-weight:400;transform:scaleX(1.0063);transform-origin:0 0;">mm</div>
<div class="b" style="left:2420.8px;top:1171.8px;width:137.8px;height:77.7px;background:#252525;border:2px solid #3d3d3d;border-radius:9px;"></div>
<div class="t" style="left:1267.8px;width:1200px;text-align:right;top:1200.4px;"><span id="f81" style="display:inline-block;font-size:23.5px;line-height:23.5px;color:#e6e6e6;font-weight:400;transform:scaleX(0.8872);transform-origin:100% 0;">5</span></div>
<div id="f82" class="t" style="left:2513.2px;top:1201.7px;font-size:22px;line-height:22px;color:#8e8e8e;font-weight:400;transform:scaleX(1.0063);transform-origin:0 0;">mm</div>
<svg class="i" style="left:2635.8px;top:1196.8px;width:28px;height:28px;" viewBox="0 0 24 24"><path fill="#fff" d="M16 1H4c-1.1 0-2 .9-2 2v14h2V3h12V1zm3 4H8c-1.1 0-2 .9-2 2v14c0 1.1.9 2 2 2h11c1.1 0 2-.9 2-2V7c0-1.1-.9-2-2-2zm0 16H8V7h11v14z"/></svg>
<div id="f83" class="t" style="left:1730.1px;top:1288.6px;font-size:23.5px;line-height:23.5px;color:#dedede;font-weight:400;transform:scaleX(0.9946);transform-origin:0 0;">X3</div>
<div class="t" style="left:1333.2px;width:1200px;text-align:center;top:1288.6px;"><span style="display:inline-block;font-size:23.5px;line-height:23.5px;color:#dedede;font-weight:400;">B</span></div>
<div class="b" style="left:1976.9px;top:1260.0px;width:137.8px;height:77.7px;background:#252525;border:2px solid #3d3d3d;border-radius:9px;"></div>
<div class="t" style="left:823.6px;width:1200px;text-align:right;top:1288.6px;"><span id="f84" style="display:inline-block;font-size:23.5px;line-height:23.5px;color:#e6e6e6;font-weight:400;transform:scaleX(0.9687);transform-origin:100% 0;">25</span></div>
<div id="f85" class="t" style="left:2069.9px;top:1289.9px;font-size:22px;line-height:22px;color:#8e8e8e;font-weight:400;transform:scaleX(1.0063);transform-origin:0 0;">mm</div>
<div class="b" style="left:2125.0px;top:1260.0px;width:137.8px;height:77.7px;background:#252525;border:2px solid #3d3d3d;border-radius:9px;"></div>
<div class="t" style="left:971.3px;width:1200px;text-align:right;top:1288.6px;"><span id="f86" style="display:inline-block;font-size:23.5px;line-height:23.5px;color:#e6e6e6;font-weight:400;transform:scaleX(0.9628);transform-origin:100% 0;">–</span></div>
<div id="f87" class="t" style="left:2217.6px;top:1289.9px;font-size:22px;line-height:22px;color:#8e8e8e;font-weight:400;transform:scaleX(1.0063);transform-origin:0 0;">mm</div>
<div class="b" style="left:2273.1px;top:1260.0px;width:137.8px;height:77.7px;background:#252525;border:2px solid #3d3d3d;border-radius:9px;"></div>
<div class="t" style="left:1120.0px;width:1200px;text-align:right;top:1288.6px;"><span id="f88" style="display:inline-block;font-size:23.5px;line-height:23.5px;color:#e6e6e6;font-weight:400;transform:scaleX(0.9613);transform-origin:100% 0;">10</span></div>
<div id="f89" class="t" style="left:2366.3px;top:1289.9px;font-size:22px;line-height:22px;color:#8e8e8e;font-weight:400;transform:scaleX(1.0063);transform-origin:0 0;">mm</div>
<div class="b" style="left:2420.8px;top:1260.0px;width:137.8px;height:77.7px;background:#252525;border:2px solid #3d3d3d;border-radius:9px;"></div>
<div class="t" style="left:1267.8px;width:1200px;text-align:right;top:1288.6px;"><span id="f90" style="display:inline-block;font-size:23.5px;line-height:23.5px;color:#e6e6e6;font-weight:400;transform:scaleX(0.8872);transform-origin:100% 0;">5</span></div>
<div id="f91" class="t" style="left:2513.2px;top:1289.9px;font-size:22px;line-height:22px;color:#8e8e8e;font-weight:400;transform:scaleX(1.0063);transform-origin:0 0;">mm</div>
<svg class="i" style="left:2635.8px;top:1285.0px;width:28px;height:28px;" viewBox="0 0 24 24"><path fill="#fff" d="M16 1H4c-1.1 0-2 .9-2 2v14h2V3h12V1zm3 4H8c-1.1 0-2 .9-2 2v14c0 1.1.9 2 2 2h11c1.1 0 2-.9 2-2V7c0-1.1-.9-2-2-2zm0 16H8V7h11v14z"/></svg>
<div class="b" style="left:1666.4px;top:1350.9px;width:1356.6px;height:95.0px;background:#303030;border-radius:10px;"></div>
<svg class="i" style="left:1680.3px;top:1381.6px;width:33.4px;height:33.4px;" viewBox="0 0 24 24"><path fill="#fff" d="M16.59 8.59L12 13.17 7.41 8.59 6 10l6 6 6-6z"/></svg>
<div class="b" style="left:1736.7px;top:1359.6px;width:138.2px;height:77.8px;background:#252525;border:2px solid #3d3d3d;border-radius:9px;"></div>
<div id="f92" class="t" style="left:1754.0px;top:1388.9px;font-size:23.5px;line-height:23.5px;color:#e8e8e8;font-weight:700;transform:scaleX(0.9071);transform-origin:0 0;">C2</div>
<div class="b" style="left:1884.6px;top:1359.6px;width:199.5px;height:77.8px;background:#252525;border:2px solid #3d3d3d;border-radius:9px;"></div>
<div id="f93" class="t" style="left:1900.2px;top:1388.5px;font-size:24px;line-height:24px;color:#e0e0e0;font-weight:400;transform:scaleX(1.0231);transform-origin:0 0;">Igus</div>
<div class="b" style="left:2093.6px;top:1359.6px;width:200.1px;height:77.8px;background:#252525;border:2px solid #3d3d3d;border-radius:9px;"></div>
<div id="f94" class="t" style="left:2111.1px;top:1388.5px;font-size:24px;line-height:24px;color:#e0e0e0;font-weight:400;transform:scaleX(0.9485);transform-origin:0 0;">CFBUS-020</div>
<div class="b" style="left:2303.7px;top:1359.6px;width:218.5px;height:77.8px;background:#252525;border:2px solid #3d3d3d;border-radius:9px;"></div>
<div class="t" style="left:1237.3px;width:1200px;text-align:right;top:1388.5px;"><span id="f95" style="display:inline-block;font-size:24px;line-height:24px;color:#e0e0e0;font-weight:400;transform:scaleX(1.0585);transform-origin:100% 0;">24</span></div>
<div id="f96" class="t" style="left:2482.1px;top:1388.5px;font-size:24px;line-height:24px;color:#9a9a9a;font-weight:400;transform:scaleX(1.0145);transform-origin:0 0;">in</div>
<div class="b" style="left:2547.2px;top:1383.8px;width:80.6px;height:30.0px;background:#3c3c3c;border-radius:15px;"></div>
<div class="t" style="left:1987.7px;width:1200px;text-align:center;top:1388.3px;"><span id="f97" style="display:inline-block;font-size:20px;line-height:20px;color:#eee;font-weight:400;transform:scaleX(0.9819);transform-origin:50% 0;">4 cores</span></div>
<div class="b" style="left:2652.0px;top:1383.8px;width:93.1px;height:30.0px;background:#ffa726;border-radius:8px;"></div>
<div class="t" style="left:2098.9px;width:1200px;text-align:center;top:1388.3px;"><span id="f98" style="display:inline-block;font-size:20px;line-height:20px;color:#1c1c1c;font-weight:400;transform:scaleX(1.0005);transform-origin:50% 0;">Shielded</span></div>
<svg class="i" style="left:2975.2px;top:1380.4px;width:36px;height:36px;" viewBox="0 0 24 24"><path fill="#fff" d="M12 8c-2.21 0-4 1.79-4 4s1.79 4 4 4 4-1.79 4-4-1.79-4-4-4zm-7 7H3v4c0 1.1.9 2 2 2h4v-2H5v-4zM5 5h4V3H5c-1.1 0-2 .9-2 2v4h2V5zm14-2h-4v2h4v4h2V5c0-1.1-.9-2-2-2zm0 16h-4v2h4c1.1 0 2-.9 2-2v-4h-2v4z"/></svg>
<div id="f99" class="t" style="left:1697.9px;top:1460.0px;font-size:20px;line-height:20px;color:#a8a8a8;font-weight:700;transform:scaleX(0.8879);transform-origin:0 0;">CORE</div>
<div id="f100" class="t" style="left:1797.9px;top:1460.0px;font-size:20px;line-height:20px;color:#a8a8a8;font-weight:700;transform:scaleX(0.8692);transform-origin:0 0;">COLOR</div>
<div class="b" style="left:1873.9px;top:1462.4px;width:2.0px;height:15.0px;background:#555;"></div>
<div class="t" style="left:1561.6px;width:1200px;text-align:center;top:1460.0px;"><span id="f101" style="display:inline-block;font-size:20px;line-height:20px;color:#a8a8a8;font-weight:700;transform:scaleX(0.9212);transform-origin:50% 0;">SIGNAL 1</span></div>
<div class="b" style="left:2449.0px;top:1462.4px;width:2.0px;height:15.0px;background:#555;"></div>
<div class="t" style="left:2137.2px;width:1200px;text-align:center;top:1460.0px;"><span id="f102" style="display:inline-block;font-size:20px;line-height:20px;color:#a8a8a8;font-weight:700;transform:scaleX(0.9473);transform-origin:50% 0;">SIGNAL 2</span></div>
<div class="t" style="left:1699.0px;top:1529.2px;font-size:24px;line-height:24px;color:#e6e6e6;font-weight:400;-webkit-text-stroke:0.60px #e6e6e6;">1</div>
<div class="b" style="left:1799.8px;top:1525.1px;width:32.0px;height:32.0px;background:#ffffff;border-radius:5px;border:1px solid rgba(0,0,0,0.25);"></div>
<div class="b" style="left:1873.9px;top:1509.2px;width:2.0px;height:63.1px;background:#4e4e4e;"></div>
<div id="f103" class="t" style="left:1892.8px;top:1531.6px;font-size:19.5px;line-height:19.5px;color:#9c9c9c;font-weight:400;transform:scaleX(0.9749);transform-origin:0 0;">X7.1</div>
<div class="b" style="left:1980.5px;top:1501.7px;width:451.9px;height:77.8px;background:#252525;border:2px solid #3d3d3d;border-radius:9px;"></div>
<div id="f104" class="t" style="left:2001.9px;top:1530.6px;font-size:24px;line-height:24px;color:#c8c8c8;font-weight:400;transform:scaleX(1.0127);transform-origin:0 0;">Signal</div>
<div class="b" style="left:2449.0px;top:1509.2px;width:2.0px;height:63.1px;background:#4e4e4e;"></div>
<div id="f105" class="t" style="left:2467.9px;top:1531.6px;font-size:19.5px;line-height:19.5px;color:#9c9c9c;font-weight:400;transform:scaleX(0.9798);transform-origin:0 0;">X6.1</div>
<div class="b" style="left:2555.5px;top:1501.7px;width:451.5px;height:77.8px;background:#252525;border:2px solid #3d3d3d;border-radius:9px;"></div>
<svg class="i" style="left:2569.2px;top:1525.1px;width:36px;height:36px;" viewBox="0 0 24 24"><path fill="#cfcfcf" d="M3.9 12c0-1.71 1.39-3.1 3.1-3.1h4V7H7c-2.76 0-5 2.24-5 5s2.24 5 5 5h4v-1.9H7c-1.71 0-3.1-1.39-3.1-3.1zM8 13h8v-2H8v2zm9-6h-4v1.9h4c1.71 0 3.1 1.39 3.1 3.1s-1.39 3.1-3.1 3.1h-4V17h4c2.76 0 5-2.24 5-5s-2.24-5-5-5z"/></svg>
<div id="f106" class="t" style="left:2624.2px;top:1530.6px;font-size:24px;line-height:24px;color:#c8c8c8;font-weight:400;transform:scaleX(1.0124);transform-origin:0 0;">Signal</div>
<div class="t" style="left:1699.0px;top:1625.1px;font-size:24px;line-height:24px;color:#e6e6e6;font-weight:400;-webkit-text-stroke:0.60px #e6e6e6;">2</div>
<div class="b" style="left:1799.8px;top:1621.0px;width:32.0px;height:32.0px;background:#00ff00;border-radius:5px;border:1px solid rgba(0,0,0,0.25);"></div>
<div class="b" style="left:1873.9px;top:1605.1px;width:2.0px;height:63.1px;background:#4e4e4e;"></div>
<div id="f107" class="t" style="left:1892.4px;top:1627.5px;font-size:19.5px;line-height:19.5px;color:#9c9c9c;font-weight:400;transform:scaleX(1.0000);transform-origin:0 0;">X6.2</div>
<div class="b" style="left:1980.5px;top:1597.6px;width:451.9px;height:77.8px;background:#252525;border:2px solid #3d3d3d;border-radius:9px;"></div>
<div id="f108" class="t" style="left:2002.7px;top:1626.5px;font-size:24px;line-height:24px;color:#c8c8c8;font-weight:400;transform:scaleX(1.0000);transform-origin:0 0;">Signal</div>
<div class="b" style="left:2449.0px;top:1605.1px;width:2.0px;height:63.1px;background:#4e4e4e;"></div>
<div id="f109" class="t" style="left:2467.7px;top:1627.5px;font-size:19.5px;line-height:19.5px;color:#9c9c9c;font-weight:400;transform:scaleX(1.0000);transform-origin:0 0;">X7.2</div>
<div class="b" style="left:2555.5px;top:1597.6px;width:451.5px;height:77.8px;background:#252525;border:2px solid #3d3d3d;border-radius:9px;"></div>
<svg class="i" style="left:2569.2px;top:1621.0px;width:36px;height:36px;" viewBox="0 0 24 24"><path fill="#cfcfcf" d="M3.9 12c0-1.71 1.39-3.1 3.1-3.1h4V7H7c-2.76 0-5 2.24-5 5s2.24 5 5 5h4v-1.9H7c-1.71 0-3.1-1.39-3.1-3.1zM8 13h8v-2H8v2zm9-6h-4v1.9h4c1.71 0 3.1 1.39 3.1 3.1s-1.39 3.1-3.1 3.1h-4V17h4c2.76 0 5-2.24 5-5s-2.24-5-5-5z"/></svg>
<div id="f110" class="t" style="left:2625.6px;top:1626.5px;font-size:24px;line-height:24px;color:#c8c8c8;font-weight:400;transform:scaleX(1.0000);transform-origin:0 0;">Signal</div>
</div></div>
<div class="b" style="left:3024.4px;top:427.0px;width:23.1px;height:439.0px;background:#676767;border-radius:0 0 5px 5px;"></div>
<div class="b" style="left:1666.4px;top:1580.0px;width:1381.1px;height:2.0px;background:#444;"></div>
<div class="b" style="left:2724.3px;top:1604.0px;width:152.3px;height:77.2px;background:#404040;border:2px solid #555;border-radius:13px;"></div>
<div class="t" style="left:2200.8px;width:1200px;text-align:center;top:1628.1px;"><span id="f111" style="display:inline-block;font-size:28px;line-height:28px;color:#fff;font-weight:400;-webkit-text-stroke:0.70px #fff;transform:scaleX(0.9767);transform-origin:50% 0;">Cancel</span></div>
<div class="b" style="left:2889.1px;top:1604.0px;width:128.4px;height:77.2px;background:#263445;border:2px solid #243d5e;border-radius:13px;"></div>
<div class="t" style="left:2353.5px;width:1200px;text-align:center;top:1628.1px;"><span id="f112" style="display:inline-block;font-size:28px;line-height:28px;color:#a8a8a8;font-weight:400;-webkit-text-stroke:0.70px #a8a8a8;transform:scaleX(0.9393);transform-origin:50% 0;">Save</span></div>
</body></html>
